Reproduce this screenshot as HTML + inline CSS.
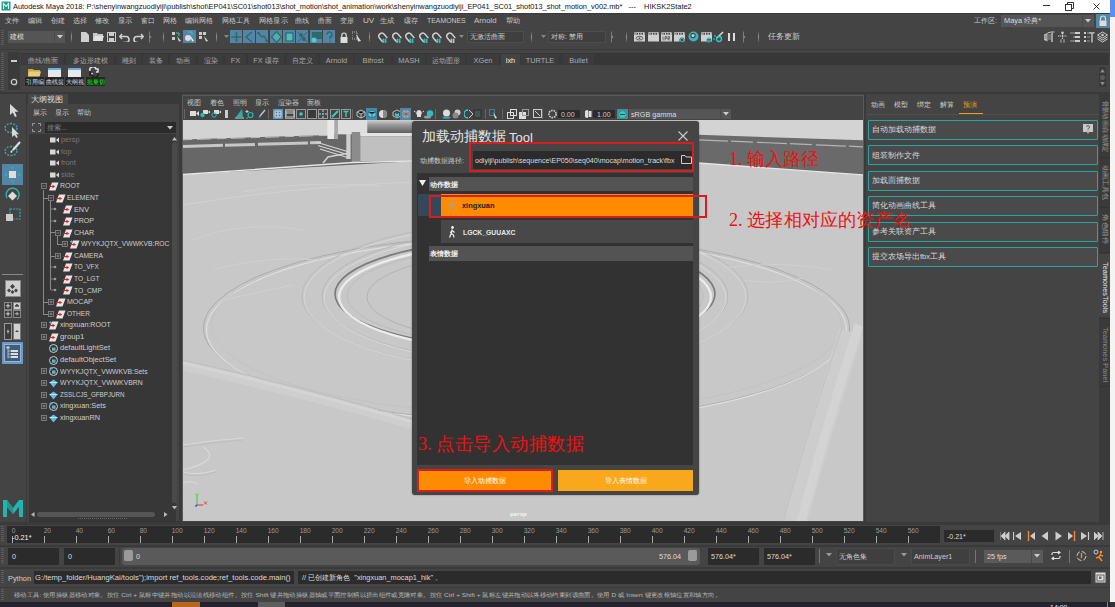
<!DOCTYPE html>
<html><head><meta charset="utf-8">
<style>
*{margin:0;padding:0;box-sizing:border-box}
html,body{width:1115px;height:607px;overflow:hidden;background:#444;font-family:"Liberation Sans",sans-serif;font-size:7.4px;color:#c8c8c8}
.a{position:absolute}
.t{position:absolute;white-space:nowrap;line-height:1}
.f{position:absolute;display:flex;white-space:nowrap;line-height:1}
</style></head><body>
<div class="a" style="left:0px;top:0px;width:1110px;height:13px;background:#fff;"></div>
<div class="a" style="left:1110px;top:0px;width:5px;height:607px;background:#f4f4f4;"></div>
<div class="a" style="left:1110px;top:0px;width:5px;height:17px;background:#5b8ef2;"></div>
<svg class="a" style="left:1px;top:1px;" width="10" height="10" viewBox="0 0 10 10"><rect x="0.5" y="0.5" width="9" height="9" fill="#1d9a93"/><path d="M2.5 8V2.5L5 5.5L7.5 2.5V8" stroke="#e8fffb" stroke-width="1.1" fill="none"/></svg>
<div class="t" style="left:13px;top:3px;font-size:7.4px;color:#111;">Autodesk Maya 2018: P:\shenyinwangzuodiyiji\publish\shot\EP041\SC01\shot013\shot_motion\shot_animation\work\shenyinwangzuodiyiji_EP041_SC01_shot013_shot_motion_v002.mb* &nbsp;&nbsp;--- &nbsp;&nbsp;&nbsp;HIKSK2State2</div>
<div class="a" style="left:1043px;top:5px;width:7px;height:1px;background:#333;"></div>
<svg class="a" style="left:1065px;top:2px;" width="9" height="9" viewBox="0 0 9 9"><rect x="0.5" y="2.5" width="6" height="6" fill="none" stroke="#333"/><path d="M2.5 2.5V0.5H8.5V6.5H6.5" fill="none" stroke="#333"/></svg>
<svg class="a" style="left:1092.5px;top:2.5px;" width="7" height="7" viewBox="0 0 7 7"><path d="M0.5 0.5L6.5 6.5M6.5 0.5L0.5 6.5" stroke="#222" stroke-width="0.9"/></svg>
<div class="a" style="left:0px;top:13px;width:1110px;height:589px;background:#444;"></div>
<div class="a" style="left:0px;top:13px;width:1110px;height:1px;background:#3a3a3a;"></div>
<div class="t" style="left:4.8px;top:17px;font-size:7.4px;color:#c8c8c8;transform-origin:0 0;;transform:scaleX(1.043)">文件</div>
<div class="t" style="left:27.8px;top:17px;font-size:7.4px;color:#c8c8c8;transform-origin:0 0;;transform:scaleX(1.014)">编辑</div>
<div class="t" style="left:50.6px;top:17px;font-size:7.4px;color:#c8c8c8;transform-origin:0 0;;transform:scaleX(1.000)">创建</div>
<div class="t" style="left:72.7px;top:17px;font-size:7.4px;color:#c8c8c8;transform-origin:0 0;;transform:scaleX(1.021)">选择</div>
<div class="t" style="left:95.3px;top:17px;font-size:7.4px;color:#c8c8c8;transform-origin:0 0;;transform:scaleX(1.050)">修改</div>
<div class="t" style="left:118px;top:17px;font-size:7.4px;color:#c8c8c8;transform-origin:0 0;;transform:scaleX(1.036)">显示</div>
<div class="t" style="left:140.7px;top:17px;font-size:7.4px;color:#c8c8c8;transform-origin:0 0;;transform:scaleX(0.964)">窗口</div>
<div class="t" style="left:162.8px;top:17px;font-size:7.4px;color:#c8c8c8;transform-origin:0 0;;transform:scaleX(1.014)">网格</div>
<div class="t" style="left:185.4px;top:17px;font-size:7.4px;color:#c8c8c8;transform-origin:0 0;;transform:scaleX(1.000)">编辑网格</div>
<div class="t" style="left:222.1px;top:17px;font-size:7.4px;color:#c8c8c8;transform-origin:0 0;;transform:scaleX(0.996)">网格工具</div>
<div class="t" style="left:258.6px;top:17px;font-size:7.4px;color:#c8c8c8;transform-origin:0 0;;transform:scaleX(1.032)">网格显示</div>
<div class="t" style="left:294.7px;top:17px;font-size:7.4px;color:#c8c8c8;transform-origin:0 0;;transform:scaleX(1.021)">曲线</div>
<div class="t" style="left:318px;top:17px;font-size:7.4px;color:#c8c8c8;transform-origin:0 0;;transform:scaleX(0.964)">曲面</div>
<div class="t" style="left:340px;top:17px;font-size:7.4px;color:#c8c8c8;transform-origin:0 0;;transform:scaleX(1.000)">变形</div>
<div class="t" style="left:362.7px;top:17px;font-size:7.4px;color:#c8c8c8;transform-origin:0 0;;transform:scaleX(1.099)">UV</div>
<div class="t" style="left:380.4px;top:17px;font-size:7.4px;color:#c8c8c8;transform-origin:0 0;;transform:scaleX(1.043)">生成</div>
<div class="t" style="left:403.6px;top:17px;font-size:7.4px;color:#c8c8c8;transform-origin:0 0;;transform:scaleX(1.029)">缓存</div>
<div class="t" style="left:426.7px;top:17px;font-size:7.4px;color:#c8c8c8;transform-origin:0 0;;transform:scaleX(0.933)">TEAMONES</div>
<div class="t" style="left:474px;top:17px;font-size:7.4px;color:#c8c8c8;transform-origin:0 0;;transform:scaleX(1.057)">Arnold</div>
<div class="t" style="left:505.7px;top:17px;font-size:7.4px;color:#c8c8c8;transform-origin:0 0;;transform:scaleX(1.021)">帮助</div>
<div class="t" style="left:974px;top:17px;font-size:7.4px;color:#c8c8c8;">工作区:</div>
<div class="a" style="left:1001px;top:15px;width:93px;height:12px;background:#555;"></div>
<div class="a" style="left:1082px;top:15px;width:1px;height:12px;background:#4a4a4a;"></div>
<div class="t" style="left:1004px;top:17px;font-size:7.4px;color:#ddd;">Maya 经典*</div>
<svg class="a" style="left:1085px;top:19px;" width="6" height="4" viewBox="0 0 6 4"><path d="M0 0H6L3 3.5Z" fill="#ccc"/></svg>
<div class="a" style="left:1096px;top:14px;width:14px;height:14px;background:#5285a6;"></div>
<svg class="a" style="left:1098px;top:15px;" width="10" height="12" viewBox="0 0 10 12"><path d="M2.5 5.5V3.5A2.5 2.5 0 0 1 7.5 3.5V5.5" fill="none" stroke="#ddd" stroke-width="1.2"/><rect x="1.5" y="5.5" width="7" height="5.5" fill="#ddd"/></svg>
<div class="a" style="left:1px;top:30px;width:3px;height:16px;background:repeating-linear-gradient(#5c5c5c 0 1px,transparent 1px 2px);"></div>
<div class="a" style="left:8px;top:31px;width:57px;height:12px;background:#555;"></div>
<div class="a" style="left:54px;top:31px;width:1px;height:12px;background:#4a4a4a;"></div>
<div class="t" style="left:10px;top:33px;font-size:7.4px;color:#e0e0e0;">建模</div>
<svg class="a" style="left:57px;top:35px;" width="6" height="4" viewBox="0 0 6 4"><path d="M0 0H6L3 3.5Z" fill="#ccc"/></svg>
<svg class="a" style="left:70px;top:30.5px;" width="3" height="12" viewBox="0 0 3 12"><path d="M1.5 0 Q0.3 6.0 1.5 12 Q2.7 6.0 1.5 0Z" fill="#8a8a8a"/></svg>
<svg class="a" style="left:81px;top:32px;" width="8" height="10" viewBox="0 0 8 10"><path d="M0 0H5L8 3V10H0Z" fill="#d0d0d0"/></svg>
<svg class="a" style="left:93px;top:32px;" width="11" height="10" viewBox="0 0 11 10"><path d="M0 1H4L5 2H10V9H0Z" fill="#c8c8c8"/><path d="M2 4H11L9 9H0Z" fill="#e0e0e0"/></svg>
<svg class="a" style="left:107px;top:32px;" width="9" height="10" viewBox="0 0 9 10"><rect x="0.5" y="0.5" width="8" height="9" fill="none" stroke="#ccc"/><rect x="2" y="1" width="5" height="3" fill="#ccc"/><rect x="2" y="6" width="5" height="3" fill="#ccc"/></svg>
<svg class="a" style="left:119px;top:33px;" width="11" height="9" viewBox="0 0 11 9"><path d="M3 1L0.8 3.5L3 6" fill="none" stroke="#d0d0d0" stroke-width="1.5"/><path d="M1 3.5H7A3 3 0 0 1 7 9.5H4" fill="none" stroke="#d0d0d0" stroke-width="1.6"/></svg>
<svg class="a" style="left:133px;top:33px;" width="11" height="9" viewBox="0 0 11 9"><path d="M8 1L10.2 3.5L8 6" fill="none" stroke="#d0d0d0" stroke-width="1.5"/><path d="M10 3.5H4A3 3 0 0 0 4 9.5H5" fill="none" stroke="#d0d0d0" stroke-width="1.6"/></svg>
<svg class="a" style="left:148px;top:30.5px;" width="4" height="12" viewBox="0 0 4 12"><path d="M1.5 0.5V11.5" stroke="#7a7a7a" stroke-width="1"/><path d="M1.5 4L3.5 6L1.5 8Z" fill="#8a8a8a"/></svg>
<svg class="a" style="left:162px;top:30.5px;" width="3" height="12" viewBox="0 0 3 12"><path d="M1.5 0 Q0.3 6.0 1.5 12 Q2.7 6.0 1.5 0Z" fill="#8a8a8a"/></svg>
<svg class="a" style="left:172px;top:31px;" width="10" height="12" viewBox="0 0 10 12"><rect x="0" y="1" width="3" height="3" fill="#ccc"/><rect x="0" y="6" width="3" height="3" fill="#ccc"/><path d="M4 2H7V5" stroke="#3cc" fill="none"/><path d="M5 5L9 10L7 10.5Z" fill="#ddd"/></svg>
<div class="a" style="left:183px;top:30px;width:13px;height:13px;background:#5285a6;"></div>
<svg class="a" style="left:184px;top:31px;" width="11" height="11" viewBox="0 0 11 11"><circle cx="4" cy="7" r="3" fill="#ddd"/><path d="M4 1H8V4" stroke="#3cc" fill="none"/><path d="M6 4L10 10L8 10.5Z" fill="#eee"/></svg>
<svg class="a" style="left:199px;top:31px;" width="10" height="12" viewBox="0 0 10 12"><rect x="0" y="1" width="3" height="3" fill="#ccc"/><rect x="4" y="1" width="3" height="3" fill="#ccc"/><rect x="0" y="5" width="3" height="3" fill="#ccc"/><path d="M5 5L9 10L7 10.5Z" fill="#ddd"/></svg>
<svg class="a" style="left:215px;top:30.5px;" width="3" height="12" viewBox="0 0 3 12"><path d="M1.5 0 Q0.3 6.0 1.5 12 Q2.7 6.0 1.5 0Z" fill="#8a8a8a"/></svg>
<svg class="a" style="left:224px;top:35px;" width="5" height="3" viewBox="0 0 5 3"><path d="M0 0H5L2.5 3Z" fill="#888"/></svg>
<div class="a" style="left:230px;top:30px;width:12px;height:13px;background:#5285a6;"></div>
<svg class="a" style="left:230.5px;top:31px;" width="11" height="12" viewBox="0 0 11 12"><path d="M5.5 1V11M0.5 6H10.5" stroke="#2a6b70" stroke-width="1.6"/></svg>
<div class="a" style="left:243px;top:30px;width:12px;height:13px;background:#5285a6;"></div>
<svg class="a" style="left:243.5px;top:31px;" width="11" height="12" viewBox="0 0 11 12"><path d="M8 1L2 6L8 11" stroke="#2a6b70" stroke-width="1.4" fill="none"/></svg>
<div class="a" style="left:256px;top:30px;width:12px;height:13px;background:#5285a6;"></div>
<svg class="a" style="left:256.5px;top:31px;" width="11" height="12" viewBox="0 0 11 12"><path d="M1 2L5 6L7 5L10 10" stroke="#2a6b70" stroke-width="1.4" fill="none"/><circle cx="1.5" cy="2" r="1.3" fill="#2a6b70"/><circle cx="9.5" cy="10" r="1.3" fill="#2a6b70"/></svg>
<div class="a" style="left:270px;top:30px;width:12px;height:13px;background:#5285a6;"></div>
<svg class="a" style="left:270.5px;top:31px;" width="11" height="12" viewBox="0 0 11 12"><path d="M5.5 0.5L10.5 6L5.5 11.5L0.5 6Z" stroke="#2a6b70" stroke-width="1.2" fill="#5aa"/></svg>
<div class="a" style="left:283px;top:30px;width:12px;height:13px;background:#5285a6;"></div>
<svg class="a" style="left:283.5px;top:31px;" width="11" height="12" viewBox="0 0 11 12"><rect x="2" y="2" width="7" height="8" stroke="#2a6b70" fill="#5bb" stroke-width="1.2"/></svg>
<div class="a" style="left:296px;top:30px;width:12px;height:13px;background:#5285a6;"></div>
<svg class="a" style="left:296.5px;top:31px;" width="11" height="12" viewBox="0 0 11 12"><circle cx="4" cy="4" r="2" fill="#2a6b70"/><circle cx="7" cy="8" r="2" fill="#2a6b70"/><path d="M1 1L10 11M10 1L1 11" stroke="#2a6b70"/></svg>
<div class="a" style="left:310px;top:30px;width:12px;height:13px;background:#5285a6;"></div>
<svg class="a" style="left:310.5px;top:31px;" width="11" height="12" viewBox="0 0 11 12"><rect x="1" y="1" width="10" height="7" fill="#2a6b70"/><circle cx="3" cy="9" r="2.5" fill="#5cc"/></svg>
<div class="a" style="left:323px;top:30px;width:12px;height:13px;background:#5285a6;"></div>
<svg class="a" style="left:323.5px;top:31px;" width="11" height="12" viewBox="0 0 11 12"><path d="M3 3.5A2.5 2.5 0 1 1 6 6V8M6 10V11" stroke="#2a6b70" stroke-width="1.5" fill="none"/></svg>
<svg class="a" style="left:340px;top:32px;" width="8" height="11" viewBox="0 0 8 11"><path d="M1.8 5V3.2A2.2 2.2 0 0 1 6.2 3.2V5" fill="none" stroke="#ddd" stroke-width="1.2"/><rect x="0.5" y="5" width="7" height="6" fill="#ddd"/></svg>
<svg class="a" style="left:352px;top:31px;" width="10" height="12" viewBox="0 0 10 12"><rect x="0" y="1" width="5" height="7" fill="none" stroke="#bbb" stroke-dasharray="1 1"/><path d="M4 3L9 10L6 10.5Z" fill="#ddd"/></svg>
<svg class="a" style="left:368px;top:30.5px;" width="3" height="12" viewBox="0 0 3 12"><path d="M1.5 0 Q0.3 6.0 1.5 12 Q2.7 6.0 1.5 0Z" fill="#8a8a8a"/></svg>
<svg class="a" style="left:377px;top:31px;" width="11" height="12" viewBox="0 0 11 12"><g transform="rotate(-40 5.5 6)"><path d="M2.5 10V5A3 3 0 0 1 8.5 5V10" fill="none" stroke="#d0d0d0" stroke-width="1.5"/></g><path d="M5 9H10M5 11H10M6.5 7.5V12M8.5 7.5V12" stroke="#3cc" stroke-width="0.8"/></svg>
<svg class="a" style="left:391px;top:31px;" width="11" height="12" viewBox="0 0 11 12"><g transform="rotate(-40 5.5 6)"><path d="M2.5 10V5A3 3 0 0 1 8.5 5V10" fill="none" stroke="#d0d0d0" stroke-width="1.5"/></g><path d="M5 9H10M5 11H10M6.5 7.5V12M8.5 7.5V12" stroke="#3cc" stroke-width="0.8"/></svg>
<svg class="a" style="left:404px;top:31px;" width="11" height="12" viewBox="0 0 11 12"><g transform="rotate(-40 5.5 6)"><path d="M2.5 10V5A3 3 0 0 1 8.5 5V10" fill="none" stroke="#d0d0d0" stroke-width="1.5"/></g><path d="M5 9H10M5 11H10M6.5 7.5V12M8.5 7.5V12" stroke="#3cc" stroke-width="0.8"/></svg>
<svg class="a" style="left:418px;top:31px;" width="11" height="12" viewBox="0 0 11 12"><g transform="rotate(-40 5.5 6)"><path d="M2.5 10V5A3 3 0 0 1 8.5 5V10" fill="none" stroke="#d0d0d0" stroke-width="1.5"/></g><path d="M5 9H10M5 11H10M6.5 7.5V12M8.5 7.5V12" stroke="#3cc" stroke-width="0.8"/></svg>
<svg class="a" style="left:431px;top:31px;" width="11" height="12" viewBox="0 0 11 12"><g transform="rotate(-40 5.5 6)"><path d="M2.5 10V5A3 3 0 0 1 8.5 5V10" fill="none" stroke="#d0d0d0" stroke-width="1.5"/></g><path d="M5 9H10M5 11H10M6.5 7.5V12M8.5 7.5V12" stroke="#3cc" stroke-width="0.8"/></svg>
<svg class="a" style="left:445px;top:31px;" width="11" height="12" viewBox="0 0 11 12"><g transform="rotate(-40 5.5 6)"><path d="M2.5 10V5A3 3 0 0 1 8.5 5V10" fill="none" stroke="#d0d0d0" stroke-width="1.5"/></g><path d="M5 9H10M5 11H10M6.5 7.5V12M8.5 7.5V12" stroke="#ccc" stroke-width="0.8"/></svg>
<svg class="a" style="left:459px;top:35px;" width="5" height="3" viewBox="0 0 5 3"><path d="M0 0H5L2.5 3Z" fill="#888"/></svg>
<div class="a" style="left:467px;top:30.5px;width:57px;height:12px;background:#3f3f3f;border:1px solid #4d4d4d"></div>
<div class="t" style="left:470px;top:33px;font-size:7.4px;color:#ccc;">无激活曲面</div>
<svg class="a" style="left:530px;top:30.5px;" width="3" height="12" viewBox="0 0 3 12"><path d="M1.5 0 Q0.3 6.0 1.5 12 Q2.7 6.0 1.5 0Z" fill="#8a8a8a"/></svg>
<svg class="a" style="left:541px;top:35px;" width="5" height="3" viewBox="0 0 5 3"><path d="M0 0H5L2.5 3Z" fill="#888"/></svg>
<div class="a" style="left:548px;top:30.5px;width:58px;height:12px;background:#3f3f3f;border:1px solid #4d4d4d"></div>
<div class="t" style="left:551px;top:33px;font-size:7.4px;color:#ccc;">对称: 禁用</div>
<svg class="a" style="left:610px;top:30.5px;" width="4" height="12" viewBox="0 0 4 12"><path d="M1.5 0.5V11.5" stroke="#7a7a7a" stroke-width="1"/><path d="M1.5 4L3.5 6L1.5 8Z" fill="#8a8a8a"/></svg>
<svg class="a" style="left:625px;top:30.5px;" width="3" height="12" viewBox="0 0 3 12"><path d="M1.5 0 Q0.3 6.0 1.5 12 Q2.7 6.0 1.5 0Z" fill="#8a8a8a"/></svg>
<svg class="a" style="left:634px;top:32px;" width="11" height="10" viewBox="0 0 11 10"><path d="M0.5 0.5H10.5V3H0.5Z" fill="none" stroke="#bbb" stroke-width="0.8"/><path d="M2 0.5V3M4.5 0.5V3M7 0.5V3M9.5 0.5V3" stroke="#ccc" stroke-width="1"/><rect x="0" y="3" width="11" height="6.5" fill="#cfcfcf"/><ellipse cx="5.5" cy="6.2" rx="3.5" ry="1.8" fill="none" stroke="#555" stroke-width="0.9"/><circle cx="5.5" cy="6.2" r="0.9" fill="#555"/></svg>
<svg class="a" style="left:648px;top:32px;" width="11" height="10" viewBox="0 0 11 10"><path d="M0.5 0.5H10.5V3H0.5Z" fill="none" stroke="#bbb" stroke-width="0.8"/><path d="M2 0.5V3M4.5 0.5V3M7 0.5V3M9.5 0.5V3" stroke="#ccc" stroke-width="1"/><rect x="0" y="3" width="11" height="6.5" fill="#cfcfcf"/></svg>
<svg class="a" style="left:661px;top:32px;" width="11" height="10" viewBox="0 0 11 10"><path d="M0.5 0.5H10.5V3H0.5Z" fill="none" stroke="#bbb" stroke-width="0.8"/><path d="M2 0.5V3M4.5 0.5V3M7 0.5V3M9.5 0.5V3" stroke="#ccc" stroke-width="1"/><rect x="0" y="3" width="11" height="6.5" fill="#cfcfcf"/><path d="M2 4.5V8.5M4 8.5V4.5H5.5V6.5H4M7 8.5V4.5H8.5V6.5H7L9 8.5" stroke="#555" stroke-width="0.8" fill="none"/></svg>
<svg class="a" style="left:674px;top:32px;" width="11" height="11" viewBox="0 0 11 11"><path d="M0.5 0.5H10.5V3H0.5Z" fill="none" stroke="#bbb" stroke-width="0.8"/><path d="M2 0.5V3M4.5 0.5V3M7 0.5V3M9.5 0.5V3" stroke="#ccc" stroke-width="1"/><rect x="0" y="3" width="11" height="6.5" fill="#cfcfcf"/><circle cx="8" cy="8" r="2.6" fill="#444"/><circle cx="8" cy="8" r="1.8" fill="none" stroke="#3bc" stroke-width="1"/></svg>
<svg class="a" style="left:688px;top:31px;" width="11" height="11" viewBox="0 0 11 11"><circle cx="5.5" cy="5.5" r="5" fill="#38b6be"/><circle cx="5" cy="4.6" r="2.6" fill="#3a3a3a"/><circle cx="5" cy="4.6" r="1.6" fill="#ccc"/></svg>
<svg class="a" style="left:701px;top:32px;" width="11" height="11" viewBox="0 0 11 11"><path d="M0.5 0.5H10.5V3H0.5Z" fill="none" stroke="#bbb" stroke-width="0.8"/><path d="M2 0.5V3M4.5 0.5V3M7 0.5V3M9.5 0.5V3" stroke="#ccc" stroke-width="1"/><rect x="0" y="3" width="11" height="6.5" fill="#cfcfcf"/><circle cx="8" cy="8" r="2.6" fill="#3bc"/><path d="M6 7.5H10M6 9H10" stroke="#444" stroke-width="0.6"/></svg>
<svg class="a" style="left:713px;top:31px;" width="11" height="12" viewBox="0 0 11 12"><path d="M10 1L4 7" stroke="#ddd" stroke-width="1.5"/><circle cx="6" cy="8" r="2.5" fill="none" stroke="#3cc" stroke-width="1.3"/><path d="M0 8H2M1 5H3" stroke="#3cc"/></svg>
<div class="a" style="left:728px;top:33px;width:2px;height:8px;background:#ddd;"></div>
<div class="a" style="left:733px;top:33px;width:2px;height:8px;background:#ddd;"></div>
<svg class="a" style="left:742px;top:30.5px;" width="4" height="12" viewBox="0 0 4 12"><path d="M1.5 0.5V11.5" stroke="#7a7a7a" stroke-width="1"/><path d="M1.5 4L3.5 6L1.5 8Z" fill="#8a8a8a"/></svg>
<svg class="a" style="left:757px;top:30.5px;" width="3" height="12" viewBox="0 0 3 12"><path d="M1.5 0 Q0.3 6.0 1.5 12 Q2.7 6.0 1.5 0Z" fill="#8a8a8a"/></svg>
<div class="t" style="left:768px;top:33px;font-size:7.6px;color:#d0d0d0;">任务更新</div>
<svg class="a" style="left:1043px;top:31px;" width="12" height="12" viewBox="0 0 12 12"><path d="M1 3.5L4.5 2V10.5L1 9Z" fill="#bbb"/><path d="M1.5 5H4M1.5 7H4" stroke="#555" stroke-width="0.6"/><path d="M4.5 2L8 1H11.5" stroke="#ccc" stroke-width="1"/><path d="M9 1.5V11" stroke="#d0d0d0" stroke-width="1.3"/><path d="M5 4H8M5 6H8M5 8H8" stroke="#aaa" stroke-width="0.8"/></svg>
<svg class="a" style="left:1057px;top:31px;" width="11" height="12" viewBox="0 0 11 12"><circle cx="5.5" cy="1.8" r="1.3" fill="#ccc"/><path d="M5.5 3.5V8M1 5H10M4 8.5V11.5M7 8.5V11.5" stroke="#ccc" stroke-width="1.1" stroke-dasharray="1.2 0.6"/></svg>
<svg class="a" style="left:1070px;top:31px;" width="11" height="12" viewBox="0 0 11 12"><path d="M0 2H5M3 6H5M0 10H5" stroke="#bbb" stroke-width="0.8"/><rect x="5" y="1" width="5" height="2" fill="#ccc"/><rect x="5" y="5" width="5" height="2" fill="#ccc"/><rect x="5" y="9" width="5" height="2" fill="#ccc"/></svg>
<svg class="a" style="left:1084px;top:31px;" width="11" height="12" viewBox="0 0 11 12"><rect x="0" y="1" width="2" height="2" fill="#ccc"/><rect x="0" y="5" width="2" height="2" fill="#ccc"/><rect x="0" y="9" width="2" height="2" fill="#ccc"/><path d="M3 2H6M3 6H6M3 10H6" stroke="#aaa" stroke-width="0.8"/><path d="M5 1.8H10.5M8 2V11.5" stroke="#d0d0d0" stroke-width="1.3"/></svg>
<svg class="a" style="left:1097px;top:31px;" width="11" height="12" viewBox="0 0 11 12"><path d="M5.5 1L10.5 4L5.5 7L0.5 4Z" fill="none" stroke="#ccc"/><path d="M0.5 6L5.5 9L10.5 6M0.5 8L5.5 11L10.5 8" stroke="#ccc" fill="none"/><circle cx="5.5" cy="4" r="1.3" fill="#ccc"/></svg>
<div class="a" style="left:0px;top:49px;width:1110px;height:1px;background:#3a3a3a;"></div>
<div class="a" style="left:1px;top:53px;width:3px;height:37px;background:repeating-linear-gradient(#5c5c5c 0 1px,transparent 1px 2px);"></div>
<div class="a" style="left:8px;top:52px;width:12px;height:38px;background:#3a3a3a;"></div>
<div class="a" style="left:11px;top:60px;width:6px;height:2px;background:#ccc;"></div>
<svg class="a" style="left:10px;top:78px;" width="8" height="8" viewBox="0 0 8 8"><circle cx="4" cy="4" r="2.7" fill="none" stroke="#ccc" stroke-width="1.3"/></svg>
<div class="a" style="left:21px;top:53px;width:1088px;height:11.5px;background:#373737;"></div>
<div class="a" style="left:22px;top:54px;width:42px;height:11px;background:#3c3c3c;"></div>
<div class="t" style="left:22px;top:56.5px;width:42px;text-align:center;font-size:7.4px;color:#aaa">曲线/曲面</div>
<div class="a" style="left:66px;top:54px;width:48px;height:11px;background:#3c3c3c;"></div>
<div class="t" style="left:66px;top:56.5px;width:48px;text-align:center;font-size:7.4px;color:#aaa">多边形建模</div>
<div class="a" style="left:116px;top:54px;width:25px;height:11px;background:#3c3c3c;"></div>
<div class="t" style="left:116px;top:56.5px;width:25px;text-align:center;font-size:7.4px;color:#aaa">雕刻</div>
<div class="a" style="left:143px;top:54px;width:25px;height:11px;background:#3c3c3c;"></div>
<div class="t" style="left:143px;top:56.5px;width:25px;text-align:center;font-size:7.4px;color:#aaa">装备</div>
<div class="a" style="left:170px;top:54px;width:26px;height:11px;background:#3c3c3c;"></div>
<div class="t" style="left:170px;top:56.5px;width:26px;text-align:center;font-size:7.4px;color:#aaa">动画</div>
<div class="a" style="left:198px;top:54px;width:25px;height:11px;background:#3c3c3c;"></div>
<div class="t" style="left:198px;top:56.5px;width:25px;text-align:center;font-size:7.4px;color:#aaa">渲染</div>
<div class="a" style="left:225px;top:54px;width:21px;height:11px;background:#3c3c3c;"></div>
<div class="t" style="left:225px;top:56.5px;width:21px;text-align:center;font-size:7.4px;color:#aaa">FX</div>
<div class="a" style="left:248px;top:54px;width:36px;height:11px;background:#3c3c3c;"></div>
<div class="t" style="left:248px;top:56.5px;width:36px;text-align:center;font-size:7.4px;color:#aaa">FX 缓存</div>
<div class="a" style="left:287px;top:54px;width:31px;height:11px;background:#3c3c3c;"></div>
<div class="t" style="left:287px;top:56.5px;width:31px;text-align:center;font-size:7.4px;color:#aaa">自定义</div>
<div class="a" style="left:320px;top:54px;width:33px;height:11px;background:#3c3c3c;"></div>
<div class="t" style="left:320px;top:56.5px;width:33px;text-align:center;font-size:7.4px;color:#aaa">Arnold</div>
<div class="a" style="left:355px;top:54px;width:36px;height:11px;background:#3c3c3c;"></div>
<div class="t" style="left:355px;top:56.5px;width:36px;text-align:center;font-size:7.4px;color:#aaa">Bifrost</div>
<div class="a" style="left:393px;top:54px;width:32px;height:11px;background:#3c3c3c;"></div>
<div class="t" style="left:393px;top:56.5px;width:32px;text-align:center;font-size:7.4px;color:#aaa">MASH</div>
<div class="a" style="left:427px;top:54px;width:38px;height:11px;background:#3c3c3c;"></div>
<div class="t" style="left:427px;top:56.5px;width:38px;text-align:center;font-size:7.4px;color:#aaa">运动图形</div>
<div class="a" style="left:467px;top:54px;width:32px;height:11px;background:#3c3c3c;"></div>
<div class="t" style="left:467px;top:56.5px;width:32px;text-align:center;font-size:7.4px;color:#aaa">XGen</div>
<div class="a" style="left:501px;top:54px;width:19px;height:11px;background:#444;"></div>
<div class="t" style="left:501px;top:56.5px;width:19px;text-align:center;font-size:7.4px;color:#eee">lxh</div>
<div class="a" style="left:521px;top:54px;width:38px;height:11px;background:#3c3c3c;"></div>
<div class="t" style="left:521px;top:56.5px;width:38px;text-align:center;font-size:7.4px;color:#aaa">TURTLE</div>
<div class="a" style="left:563px;top:54px;width:31px;height:11px;background:#3c3c3c;"></div>
<div class="t" style="left:563px;top:56.5px;width:31px;text-align:center;font-size:7.4px;color:#aaa">Bullet</div>
<div class="a" style="left:21px;top:64.5px;width:1089px;height:27.5px;background:#444;"></div>
<div class="a" style="left:1099px;top:67px;width:7px;height:20px;background:#393939;"></div>
<svg class="a" style="left:1100px;top:69px;" width="5" height="3.5" viewBox="0 0 5 3.5"><path d="M0 3.5H5L2.5 0Z" fill="#888"/></svg>
<div class="a" style="left:1100px;top:75px;width:5px;height:5px;background:#5a5a5a;border-radius:50%"></div>
<svg class="a" style="left:1100px;top:82px;" width="5" height="3.5" viewBox="0 0 5 3.5"><path d="M0 0H5L2.5 3.5Z" fill="#888"/></svg>
<svg class="a" style="left:28px;top:68px;" width="13" height="9" viewBox="0 0 13 9"><path d="M0 1H5L6 2H12V8H0Z" fill="#c9a84a"/><path d="M1 3.5H13L11.5 8.5H0Z" fill="#e8cf78"/></svg>
<div class="a" style="left:48px;top:68px;width:13px;height:9px;background:#e8e8e8;border-top:2px solid #6ab0e0"></div>
<div class="a" style="left:68px;top:68px;width:13px;height:9px;background:#e8e8e8;border-top:2px solid #6ab0e0"></div>
<svg class="a" style="left:88px;top:67px;" width="12" height="10" viewBox="0 0 12 10"><path d="M2 4A3 3 0 0 1 8 2H10V5H4V8" stroke="#ddd" stroke-width="1.6" fill="none"/><path d="M10 6A3 3 0 0 1 4 8H2V5H8" stroke="#222" stroke-width="1.6" fill="none"/></svg>
<div class="a" style="left:25px;top:77px;width:19px;height:9px;background:#262626;"></div>
<div class="t" style="left:26px;top:78.5px;font-size:6.3px;color:#ddd;">引用编</div>
<div class="a" style="left:45px;top:77px;width:19px;height:9px;background:#262626;"></div>
<div class="t" style="left:46px;top:78.5px;font-size:6.3px;color:#ddd;">曲线提</div>
<div class="a" style="left:65px;top:77px;width:19px;height:9px;background:#262626;"></div>
<div class="t" style="left:66px;top:78.5px;font-size:6.3px;color:#ddd;">大纲视</div>
<div class="a" style="left:86px;top:77px;width:19px;height:9px;background:#262626;"></div>
<div class="t" style="left:87px;top:78.5px;font-size:6.3px;color:#0f0;">批量切</div>
<div class="a" style="left:0px;top:602px;width:1110px;height:5px;background:#24222c;"></div>
<div class="a" style="left:172px;top:602px;width:28px;height:5px;background:#b8651e;"></div>
<div class="a" style="left:258px;top:602px;width:27px;height:5px;background:#5e5e5e;"></div>
<div class="a" style="left:0px;top:92px;width:1110px;height:2px;background:#393939;"></div>
<div class="a" style="left:7px;top:94px;width:3px;height:3px;background:repeating-linear-gradient(#5c5c5c 0 1px,transparent 1px 2px);"></div>
<div class="a" style="left:0px;top:94px;width:27px;height:429px;background:#444;"></div>
<svg class="a" style="left:9px;top:103px;" width="10" height="15" viewBox="0 0 10 15"><path d="M1 1V12L3.8 9.5L6 14L7.8 13.2L5.8 8.8H9.5Z" fill="#d8d8d8"/></svg>
<svg class="a" style="left:4px;top:122px;" width="17" height="16" viewBox="0 0 17 16"><ellipse cx="7" cy="6" rx="6" ry="4.5" fill="none" stroke="#2bb3b3" stroke-width="1.4" stroke-dasharray="2 1.3"/><path d="M8 5V15L10.5 13L12.3 16L13.8 15.2L12.2 12.3H15Z" fill="#d8d8d8"/></svg>
<svg class="a" style="left:4px;top:141px;" width="17" height="17" viewBox="0 0 17 17"><ellipse cx="7" cy="10" rx="6" ry="4.5" fill="none" stroke="#2bb3b3" stroke-width="1.4" stroke-dasharray="2 1.3"/><path d="M16 1L9 9" stroke="#ddd" stroke-width="2"/><path d="M9 8L6 11L8 12Z" fill="#ddd"/></svg>
<div class="a" style="left:2px;top:164px;width:21px;height:21px;background:#5285a6;"></div>
<svg class="a" style="left:3px;top:165px;" width="19" height="19" viewBox="0 0 19 19"><rect x="6" y="6" width="7" height="7" fill="#ddd"/><path d="M9.5 1L7.5 3.5H11.5Z M9.5 18L7.5 15.5H11.5Z M1 9.5L3.5 7.5V11.5Z M18 9.5L15.5 7.5V11.5Z" fill="#2bb3b3"/></svg>
<svg class="a" style="left:4px;top:187px;" width="17" height="17" viewBox="0 0 17 17"><path d="M3 11A6.5 6.5 0 1 1 13 12.5" fill="none" stroke="#2bb3b3" stroke-width="1.4"/><path d="M8.5 4.5L13 9L8.5 13.5L4 9Z" fill="#ddd"/></svg>
<svg class="a" style="left:5px;top:208px;" width="16" height="14" viewBox="0 0 16 14"><rect x="5" y="1" width="10" height="10" fill="none" stroke="#2bb3b3" stroke-width="1.2" stroke-dasharray="2 1.2"/><rect x="1" y="6" width="7" height="7" fill="#ccc"/></svg>
<div class="a" style="left:2px;top:274px;width:21px;height:1px;background:#888;"></div>
<div class="a" style="left:5px;top:280px;width:16px;height:17px;background:#cfcfcf;border:1px solid #888"></div>
<svg class="a" style="left:6px;top:282px;" width="13" height="13" viewBox="0 0 13 13"><path d="M6.5 2L9 4.5L6.5 7L4 4.5Z M3 6.5L5 8.5L3 10.5L1 8.5Z M10 6.5L12 8.5L10 10.5L8 8.5Z M6.5 8L8.5 10L6.5 12L4.5 10Z" fill="#444"/></svg>
<div class="a" style="left:4px;top:302px;width:8px;height:7.5px;background:#3c3c3c;border:1px solid #888"></div>
<div class="a" style="left:13px;top:302px;width:8px;height:7.5px;background:#d0d0d0;border:1px solid #888"></div>
<div class="a" style="left:4px;top:310px;width:8px;height:7.5px;background:#3c3c3c;border:1px solid #888"></div>
<div class="a" style="left:13px;top:310px;width:8px;height:7.5px;background:#3c3c3c;border:1px solid #888"></div>
<svg class="a" style="left:4px;top:302px;" width="8" height="8" viewBox="0 0 8 8"><path d="M4 1.5V6M1.8 3.8H6.2" stroke="#ccc" stroke-width="1"/></svg>
<svg class="a" style="left:4px;top:310px;" width="8" height="8" viewBox="0 0 8 8"><path d="M4 1.5V6M1.8 3.8H6.2" stroke="#ccc" stroke-width="1"/></svg>
<svg class="a" style="left:13px;top:302px;" width="8" height="8" viewBox="0 0 8 8"><path d="M4 2L6 4H2Z M2 4.5H6" fill="#444" stroke="#444" stroke-width="0.6"/></svg>
<svg class="a" style="left:13px;top:310px;" width="8" height="8" viewBox="0 0 8 8"><path d="M1.8 3.8H6.2M4 2V5.5" stroke="#bbb" stroke-width="0.9"/></svg>
<div class="a" style="left:4px;top:323px;width:8px;height:17px;background:#3c3c3c;border:1px solid #999"></div>
<svg class="a" style="left:4px;top:323px;" width="8" height="17" viewBox="0 0 8 17"><path d="M4 6.5V10.5M2.8 8.5H5.2" stroke="#bbb" stroke-width="0.9"/></svg>
<div class="a" style="left:13px;top:323px;width:8px;height:17px;background:#d0d0d0;border:1px solid #777"></div>
<svg class="a" style="left:13px;top:323px;" width="8" height="17" viewBox="0 0 8 17"><path d="M4 7L6 9H2Z" fill="#444"/></svg>
<div class="a" style="left:2px;top:342px;width:21px;height:22px;background:#5a9fcf;"></div>
<div class="a" style="left:4px;top:344px;width:17px;height:18px;background:#3d5e78;border:1px solid #aac"></div>
<svg class="a" style="left:5px;top:345px;" width="15" height="16" viewBox="0 0 15 16"><rect x="1.5" y="1.5" width="3" height="2" fill="#ddd"/><path d="M3 3.5V13M3 6H6M3 9H6M3 12H6" stroke="#ccc" stroke-width="0.8"/><rect x="6" y="5" width="7" height="2" fill="#ddd"/><rect x="6" y="8" width="7" height="2" fill="#ddd"/><rect x="6" y="11" width="7" height="2" fill="#ddd"/></svg>
<svg class="a" style="left:3px;top:499px;" width="20" height="19" viewBox="0 0 20 19"><path d="M0 18V1H4L10 9L16 1H20V18H16V8L10 15L4 8V18Z" fill="#1fb5b0"/><path d="M4 1L10 9V15L4 8Z" fill="#2a8f8f"/></svg>
<div class="a" style="left:27px;top:94px;width:152px;height:10px;background:#393939;"></div>
<div class="a" style="left:28px;top:94px;width:40px;height:10px;background:#474747;"></div>
<div class="t" style="left:31px;top:96px;font-size:7.6px;color:#ddd;">大纲视图</div>
<div class="a" style="left:26px;top:94px;width:1px;height:428px;background:#393939;"></div>
<div class="a" style="left:27px;top:104px;width:152px;height:418px;background:#444;"></div>
<div class="f" style="left:33px;top:108.5px;font-size:7.4px;color:#c8c8c8;gap:8px"><span>展示</span><span>显示</span><span>帮助</span></div>
<svg class="a" style="left:32px;top:123px;" width="9" height="9" viewBox="0 0 9 9"><path d="M0.5 3V0.5H3M6 0.5H8.5V3M8.5 6V8.5H6M3 8.5H0.5V6" stroke="#999" fill="none"/></svg>
<div class="a" style="left:45px;top:122px;width:131px;height:11px;background:#2b2b2b;"></div>
<div class="t" style="left:47px;top:124px;font-size:7.4px;color:#888;">搜索...</div>
<svg class="a" style="left:167px;top:126px;" width="6" height="4" viewBox="0 0 6 4"><path d="M0 0H6L3 3.5Z" fill="#ccc"/></svg>
<div class="a" style="left:29px;top:134px;width:147px;height:388px;background:#373737;"></div>
<svg class="a" style="left:172px;top:137px;" width="5" height="4" viewBox="0 0 5 4"><path d="M0 3.5H5L2.5 0Z" fill="#bbb"/></svg>
<div class="a" style="left:172px;top:142px;width:5px;height:361px;background:#4a4a4a;border-radius:2.5px"></div>
<svg class="a" style="left:172px;top:506px;" width="5" height="4" viewBox="0 0 5 4"><path d="M0 0H5L2.5 3.5Z" fill="#bbb"/></svg>
<svg class="a" style="left:31px;top:511.5px;" width="4" height="5" viewBox="0 0 4 5"><path d="M3.5 0V5L0 2.5Z" fill="#bbb"/></svg>
<div class="a" style="left:37px;top:511.5px;width:118px;height:5px;background:#555;border-radius:2.5px"></div>
<svg class="a" style="left:164px;top:511.5px;" width="4" height="5" viewBox="0 0 4 5"><path d="M0 0V5L3.5 2.5Z" fill="#bbb"/></svg>
<div class="a" style="left:78px;top:517.5px;width:50px;height:1px;background:repeating-linear-gradient(90deg,#666 0 1px,transparent 1px 2px);"></div>
<div class="a" style="left:29px;top:521px;width:150px;height:1px;background:#333;"></div>
<div class="a" style="left:43px;top:190px;width:1px;height:124px;background:#8a8a8a;"></div>
<div class="a" style="left:50px;top:201px;width:1px;height:89px;background:#8a8a8a;"></div>
<div class="a" style="left:57px;top:236px;width:1px;height:8px;background:#8a8a8a;"></div>
<div class="a" style="left:43px;top:197.8px;width:5px;height:0.8px;background:#8a8a8a;"></div>
<div class="a" style="left:43px;top:302px;width:5px;height:0.8px;background:#8a8a8a;"></div>
<div class="a" style="left:43px;top:313.6px;width:5px;height:0.8px;background:#8a8a8a;"></div>
<div class="a" style="left:50px;top:232.4px;width:5px;height:0.8px;background:#8a8a8a;"></div>
<div class="a" style="left:50px;top:255.8px;width:5px;height:0.8px;background:#8a8a8a;"></div>
<div class="a" style="left:57px;top:244px;width:5px;height:0.8px;background:#8a8a8a;"></div>
<svg class="a" style="left:50px;top:137.0px;" width="9" height="6" viewBox="0 0 9 6"><rect x="0" y="0.5" width="5.5" height="5" fill="#d8d8d8"/><path d="M6 3L9 0.5V5.5Z" fill="#d8d8d8"/></svg>
<div class="t" style="left:61px;top:136.2px;font-size:7.4px;color:#777;">persp</div>
<svg class="a" style="left:50px;top:148.57px;" width="9" height="6" viewBox="0 0 9 6"><rect x="0" y="0.5" width="5.5" height="5" fill="#d8d8d8"/><path d="M6 3L9 0.5V5.5Z" fill="#d8d8d8"/></svg>
<div class="t" style="left:61px;top:147.77px;font-size:7.4px;color:#777;">top</div>
<svg class="a" style="left:50px;top:160.14px;" width="9" height="6" viewBox="0 0 9 6"><rect x="0" y="0.5" width="5.5" height="5" fill="#d8d8d8"/><path d="M6 3L9 0.5V5.5Z" fill="#d8d8d8"/></svg>
<div class="t" style="left:61px;top:159.34px;font-size:7.4px;color:#777;">front</div>
<svg class="a" style="left:50px;top:171.71px;" width="9" height="6" viewBox="0 0 9 6"><rect x="0" y="0.5" width="5.5" height="5" fill="#d8d8d8"/><path d="M6 3L9 0.5V5.5Z" fill="#d8d8d8"/></svg>
<div class="t" style="left:61px;top:170.91px;font-size:7.4px;color:#777;">side</div>
<svg class="a" style="left:49px;top:182.28px;" width="10" height="9" viewBox="0 0 10 9"><path d="M3 0.5H9.5L6.5 8.5H0Z" fill="#e6e6e6"/><path d="M0 4.5H4.5" stroke="#d22" stroke-width="1.1"/><path d="M3.5 2.8L6.2 4.5L3.5 6.2Z" fill="#d22"/></svg>
<svg class="a" style="left:41px;top:183.28px;" width="6" height="6" viewBox="0 0 6 6"><rect x="0.5" y="0.5" width="5" height="5" fill="#373737" stroke="#8a8a8a" stroke-width="0.8"/><path d="M1.5 3H4.5" stroke="#999" stroke-width="0.8"/></svg>
<div class="t" style="left:60px;top:182.48px;font-size:7.4px;color:#cfcfcf;transform-origin:0 0;;transform:scaleX(0.936)">ROOT</div>
<svg class="a" style="left:56px;top:193.85px;" width="10" height="9" viewBox="0 0 10 9"><path d="M3 0.5H9.5L6.5 8.5H0Z" fill="#e6e6e6"/><path d="M0 4.5H4.5" stroke="#d22" stroke-width="1.1"/><path d="M3.5 2.8L6.2 4.5L3.5 6.2Z" fill="#d22"/></svg>
<svg class="a" style="left:48px;top:194.85px;" width="6" height="6" viewBox="0 0 6 6"><rect x="0.5" y="0.5" width="5" height="5" fill="#373737" stroke="#8a8a8a" stroke-width="0.8"/><path d="M1.5 3H4.5" stroke="#999" stroke-width="0.8"/></svg>
<div class="t" style="left:67px;top:194.05px;font-size:7.4px;color:#cfcfcf;transform-origin:0 0;;transform:scaleX(0.916)">ELEMENT</div>
<svg class="a" style="left:63px;top:205.42px;" width="10" height="9" viewBox="0 0 10 9"><path d="M3 0.5H9.5L6.5 8.5H0Z" fill="#e6e6e6"/><path d="M0 4.5H4.5" stroke="#d22" stroke-width="1.1"/><path d="M3.5 2.8L6.2 4.5L3.5 6.2Z" fill="#d22"/></svg>
<svg class="a" style="left:51px;top:207.42px;" width="6" height="4" viewBox="0 0 6 4"><path d="M0 2H4" stroke="#8a8a8a" stroke-width="0.8"/><circle cx="4" cy="2" r="1.3" fill="#999"/></svg>
<div class="t" style="left:74px;top:205.62px;font-size:7.4px;color:#cfcfcf;transform-origin:0 0;;transform:scaleX(0.987)">ENV</div>
<svg class="a" style="left:63px;top:216.99px;" width="10" height="9" viewBox="0 0 10 9"><path d="M3 0.5H9.5L6.5 8.5H0Z" fill="#e6e6e6"/><path d="M0 4.5H4.5" stroke="#d22" stroke-width="1.1"/><path d="M3.5 2.8L6.2 4.5L3.5 6.2Z" fill="#d22"/></svg>
<svg class="a" style="left:51px;top:218.99px;" width="6" height="4" viewBox="0 0 6 4"><path d="M0 2H4" stroke="#8a8a8a" stroke-width="0.8"/><circle cx="4" cy="2" r="1.3" fill="#999"/></svg>
<div class="t" style="left:74px;top:217.19px;font-size:7.4px;color:#cfcfcf;transform-origin:0 0;;transform:scaleX(0.955)">PROP</div>
<svg class="a" style="left:63px;top:228.56px;" width="10" height="9" viewBox="0 0 10 9"><path d="M3 0.5H9.5L6.5 8.5H0Z" fill="#e6e6e6"/><path d="M0 4.5H4.5" stroke="#d22" stroke-width="1.1"/><path d="M3.5 2.8L6.2 4.5L3.5 6.2Z" fill="#d22"/></svg>
<svg class="a" style="left:55px;top:229.56px;" width="6" height="6" viewBox="0 0 6 6"><rect x="0.5" y="0.5" width="5" height="5" fill="#373737" stroke="#8a8a8a" stroke-width="0.8"/><path d="M1.5 3H4.5" stroke="#999" stroke-width="0.8"/></svg>
<div class="t" style="left:74px;top:228.76px;font-size:7.4px;color:#cfcfcf;transform-origin:0 0;;transform:scaleX(0.955)">CHAR</div>
<svg class="a" style="left:70px;top:240.13px;" width="10" height="9" viewBox="0 0 10 9"><path d="M3 0.5H9.5L6.5 8.5H0Z" fill="#e6e6e6"/><path d="M0 4.5H4.5" stroke="#d22" stroke-width="1.1"/><path d="M3.5 2.8L6.2 4.5L3.5 6.2Z" fill="#d22"/><path d="M1.5 0.2L3.2 1.6L1.5 3L-0.2 1.6Z" fill="#6af"/></svg>
<svg class="a" style="left:62px;top:241.13px;" width="6" height="6" viewBox="0 0 6 6"><rect x="0.5" y="0.5" width="5" height="5" fill="#373737" stroke="#8a8a8a" stroke-width="0.8"/><path d="M1.5 3H4.5" stroke="#999" stroke-width="0.8"/><path d="M3 1.5V4.5" stroke="#999" stroke-width="0.8"/></svg>
<div class="t" style="left:81px;top:240.33px;font-size:7.4px;color:#cfcfcf;transform-origin:0 0;;transform:scaleX(0.913)">WYYKJQTX_VWWKVB:ROC</div>
<svg class="a" style="left:63px;top:251.7px;" width="10" height="9" viewBox="0 0 10 9"><path d="M3 0.5H9.5L6.5 8.5H0Z" fill="#e6e6e6"/><path d="M0 4.5H4.5" stroke="#d22" stroke-width="1.1"/><path d="M3.5 2.8L6.2 4.5L3.5 6.2Z" fill="#d22"/></svg>
<svg class="a" style="left:55px;top:252.7px;" width="6" height="6" viewBox="0 0 6 6"><rect x="0.5" y="0.5" width="5" height="5" fill="#373737" stroke="#8a8a8a" stroke-width="0.8"/><path d="M1.5 3H4.5" stroke="#999" stroke-width="0.8"/><path d="M3 1.5V4.5" stroke="#999" stroke-width="0.8"/></svg>
<div class="t" style="left:74px;top:251.9px;font-size:7.4px;color:#cfcfcf;transform-origin:0 0;;transform:scaleX(0.917)">CAMERA</div>
<svg class="a" style="left:63px;top:263.27px;" width="10" height="9" viewBox="0 0 10 9"><path d="M3 0.5H9.5L6.5 8.5H0Z" fill="#e6e6e6"/><path d="M0 4.5H4.5" stroke="#d22" stroke-width="1.1"/><path d="M3.5 2.8L6.2 4.5L3.5 6.2Z" fill="#d22"/></svg>
<svg class="a" style="left:51px;top:265.27px;" width="6" height="4" viewBox="0 0 6 4"><path d="M0 2H4" stroke="#8a8a8a" stroke-width="0.8"/><circle cx="4" cy="2" r="1.3" fill="#999"/></svg>
<div class="t" style="left:74px;top:263.47px;font-size:7.4px;color:#cfcfcf;transform-origin:0 0;;transform:scaleX(0.866)">TO_VFX</div>
<svg class="a" style="left:63px;top:274.84px;" width="10" height="9" viewBox="0 0 10 9"><path d="M3 0.5H9.5L6.5 8.5H0Z" fill="#e6e6e6"/><path d="M0 4.5H4.5" stroke="#d22" stroke-width="1.1"/><path d="M3.5 2.8L6.2 4.5L3.5 6.2Z" fill="#d22"/></svg>
<svg class="a" style="left:51px;top:276.84px;" width="6" height="4" viewBox="0 0 6 4"><path d="M0 2H4" stroke="#8a8a8a" stroke-width="0.8"/><circle cx="4" cy="2" r="1.3" fill="#999"/></svg>
<div class="t" style="left:74px;top:275.04px;font-size:7.4px;color:#cfcfcf;transform-origin:0 0;;transform:scaleX(0.891)">TO_LGT</div>
<svg class="a" style="left:63px;top:286.41px;" width="10" height="9" viewBox="0 0 10 9"><path d="M3 0.5H9.5L6.5 8.5H0Z" fill="#e6e6e6"/><path d="M0 4.5H4.5" stroke="#d22" stroke-width="1.1"/><path d="M3.5 2.8L6.2 4.5L3.5 6.2Z" fill="#d22"/></svg>
<svg class="a" style="left:51px;top:288.41px;" width="6" height="4" viewBox="0 0 6 4"><path d="M0 2H4" stroke="#8a8a8a" stroke-width="0.8"/><circle cx="4" cy="2" r="1.3" fill="#999"/></svg>
<div class="t" style="left:74px;top:286.61px;font-size:7.4px;color:#cfcfcf;transform-origin:0 0;;transform:scaleX(0.913)">TO_CMP</div>
<svg class="a" style="left:56px;top:297.98px;" width="10" height="9" viewBox="0 0 10 9"><path d="M3 0.5H9.5L6.5 8.5H0Z" fill="#e6e6e6"/><path d="M0 4.5H4.5" stroke="#d22" stroke-width="1.1"/><path d="M3.5 2.8L6.2 4.5L3.5 6.2Z" fill="#d22"/></svg>
<svg class="a" style="left:48px;top:298.98px;" width="6" height="6" viewBox="0 0 6 6"><rect x="0.5" y="0.5" width="5" height="5" fill="#373737" stroke="#8a8a8a" stroke-width="0.8"/><path d="M1.5 3H4.5" stroke="#999" stroke-width="0.8"/><path d="M3 1.5V4.5" stroke="#999" stroke-width="0.8"/></svg>
<div class="t" style="left:67px;top:298.18px;font-size:7.4px;color:#cfcfcf;transform-origin:0 0;;transform:scaleX(0.952)">MOCAP</div>
<svg class="a" style="left:56px;top:309.55px;" width="10" height="9" viewBox="0 0 10 9"><path d="M3 0.5H9.5L6.5 8.5H0Z" fill="#e6e6e6"/><path d="M0 4.5H4.5" stroke="#d22" stroke-width="1.1"/><path d="M3.5 2.8L6.2 4.5L3.5 6.2Z" fill="#d22"/></svg>
<svg class="a" style="left:48px;top:310.55px;" width="6" height="6" viewBox="0 0 6 6"><rect x="0.5" y="0.5" width="5" height="5" fill="#373737" stroke="#8a8a8a" stroke-width="0.8"/><path d="M1.5 3H4.5" stroke="#999" stroke-width="0.8"/><path d="M3 1.5V4.5" stroke="#999" stroke-width="0.8"/></svg>
<div class="t" style="left:67px;top:309.75px;font-size:7.4px;color:#cfcfcf;transform-origin:0 0;;transform:scaleX(0.889)">OTHER</div>
<svg class="a" style="left:49px;top:321.12px;" width="10" height="9" viewBox="0 0 10 9"><path d="M3 0.5H9.5L6.5 8.5H0Z" fill="#e6e6e6"/><path d="M0 4.5H4.5" stroke="#d22" stroke-width="1.1"/><path d="M3.5 2.8L6.2 4.5L3.5 6.2Z" fill="#d22"/><path d="M1.5 0.2L3.2 1.6L1.5 3L-0.2 1.6Z" fill="#6af"/></svg>
<svg class="a" style="left:41px;top:322.12px;" width="6" height="6" viewBox="0 0 6 6"><rect x="0.5" y="0.5" width="5" height="5" fill="#373737" stroke="#8a8a8a" stroke-width="0.8"/><path d="M1.5 3H4.5" stroke="#999" stroke-width="0.8"/><path d="M3 1.5V4.5" stroke="#999" stroke-width="0.8"/></svg>
<div class="t" style="left:60px;top:321.32px;font-size:7.4px;color:#cfcfcf;transform-origin:0 0;;transform:scaleX(0.957)">xingxuan:ROOT</div>
<svg class="a" style="left:49px;top:332.69px;" width="10" height="9" viewBox="0 0 10 9"><path d="M3 0.5H9.5L6.5 8.5H0Z" fill="#e6e6e6"/><path d="M0 4.5H4.5" stroke="#d22" stroke-width="1.1"/><path d="M3.5 2.8L6.2 4.5L3.5 6.2Z" fill="#d22"/></svg>
<svg class="a" style="left:41px;top:333.69px;" width="6" height="6" viewBox="0 0 6 6"><rect x="0.5" y="0.5" width="5" height="5" fill="#373737" stroke="#8a8a8a" stroke-width="0.8"/><path d="M1.5 3H4.5" stroke="#999" stroke-width="0.8"/><path d="M3 1.5V4.5" stroke="#999" stroke-width="0.8"/></svg>
<div class="t" style="left:60px;top:332.89px;font-size:7.4px;color:#cfcfcf;transform-origin:0 0;;transform:scaleX(1.056)">group1</div>
<svg class="a" style="left:49px;top:344.26px;" width="9" height="9" viewBox="0 0 9 9"><circle cx="4.5" cy="4.5" r="4" fill="none" stroke="#ccc"/><rect x="3" y="3.5" width="3.5" height="3.2" fill="#5bc"/></svg>
<div class="t" style="left:60px;top:344.46px;font-size:7.4px;color:#cfcfcf;transform-origin:0 0;;transform:scaleX(1.014)">defaultLightSet</div>
<svg class="a" style="left:49px;top:355.83px;" width="9" height="9" viewBox="0 0 9 9"><circle cx="4.5" cy="4.5" r="4" fill="none" stroke="#ccc"/><rect x="3" y="3.5" width="3.5" height="3.2" fill="#5bc"/></svg>
<div class="t" style="left:60px;top:356.03px;font-size:7.4px;color:#cfcfcf;transform-origin:0 0;;transform:scaleX(1.025)">defaultObjectSet</div>
<svg class="a" style="left:49px;top:367.4px;" width="9" height="9" viewBox="0 0 9 9"><circle cx="4.5" cy="4.5" r="4" fill="none" stroke="#ccc"/><rect x="3" y="3.5" width="3.5" height="3.2" fill="#5bc"/><path d="M2 0L3.7 1.4L2 2.8L0.3 1.4Z" fill="#6af"/></svg>
<svg class="a" style="left:41px;top:368.4px;" width="6" height="6" viewBox="0 0 6 6"><rect x="0.5" y="0.5" width="5" height="5" fill="#373737" stroke="#8a8a8a" stroke-width="0.8"/><path d="M1.5 3H4.5" stroke="#999" stroke-width="0.8"/><path d="M3 1.5V4.5" stroke="#999" stroke-width="0.8"/></svg>
<div class="t" style="left:60px;top:367.6px;font-size:7.4px;color:#cfcfcf;transform-origin:0 0;;transform:scaleX(0.919)">WYYKJQTX_VWWKVB:Sets</div>
<svg class="a" style="left:49px;top:378.97px;" width="9" height="9" viewBox="0 0 9 9"><path d="M4.5 0.5L8.5 3.5L4.5 8.5L0.5 3.5Z" fill="#6ab8f0"/><path d="M0.5 3.5H8.5" stroke="#aee"/></svg>
<svg class="a" style="left:41px;top:379.97px;" width="6" height="6" viewBox="0 0 6 6"><rect x="0.5" y="0.5" width="5" height="5" fill="#373737" stroke="#8a8a8a" stroke-width="0.8"/><path d="M1.5 3H4.5" stroke="#999" stroke-width="0.8"/><path d="M3 1.5V4.5" stroke="#999" stroke-width="0.8"/></svg>
<div class="t" style="left:60px;top:379.17px;font-size:7.4px;color:#cfcfcf;transform-origin:0 0;;transform:scaleX(0.929)">WYYKJQTX_VWWKVBRN</div>
<svg class="a" style="left:49px;top:390.54px;" width="9" height="9" viewBox="0 0 9 9"><path d="M4.5 0.5L8.5 3.5L4.5 8.5L0.5 3.5Z" fill="#6ab8f0"/><path d="M0.5 3.5H8.5" stroke="#aee"/></svg>
<svg class="a" style="left:41px;top:391.54px;" width="6" height="6" viewBox="0 0 6 6"><rect x="0.5" y="0.5" width="5" height="5" fill="#373737" stroke="#8a8a8a" stroke-width="0.8"/><path d="M1.5 3H4.5" stroke="#999" stroke-width="0.8"/><path d="M3 1.5V4.5" stroke="#999" stroke-width="0.8"/></svg>
<div class="t" style="left:60px;top:390.74px;font-size:7.4px;color:#cfcfcf;transform-origin:0 0;;transform:scaleX(0.846)">ZSSLCJS_GFBPJURN</div>
<svg class="a" style="left:49px;top:402.11px;" width="9" height="9" viewBox="0 0 9 9"><circle cx="4.5" cy="4.5" r="4" fill="none" stroke="#ccc"/><rect x="3" y="3.5" width="3.5" height="3.2" fill="#5bc"/><path d="M2 0L3.7 1.4L2 2.8L0.3 1.4Z" fill="#6af"/></svg>
<svg class="a" style="left:41px;top:403.11px;" width="6" height="6" viewBox="0 0 6 6"><rect x="0.5" y="0.5" width="5" height="5" fill="#373737" stroke="#8a8a8a" stroke-width="0.8"/><path d="M1.5 3H4.5" stroke="#999" stroke-width="0.8"/><path d="M3 1.5V4.5" stroke="#999" stroke-width="0.8"/></svg>
<div class="t" style="left:60px;top:402.31px;font-size:7.4px;color:#cfcfcf;transform-origin:0 0;;transform:scaleX(0.991)">xingxuan:Sets</div>
<svg class="a" style="left:49px;top:413.68px;" width="9" height="9" viewBox="0 0 9 9"><path d="M4.5 0.5L8.5 3.5L4.5 8.5L0.5 3.5Z" fill="#6ab8f0"/><path d="M0.5 3.5H8.5" stroke="#aee"/></svg>
<svg class="a" style="left:41px;top:414.68px;" width="6" height="6" viewBox="0 0 6 6"><rect x="0.5" y="0.5" width="5" height="5" fill="#373737" stroke="#8a8a8a" stroke-width="0.8"/><path d="M1.5 3H4.5" stroke="#999" stroke-width="0.8"/><path d="M3 1.5V4.5" stroke="#999" stroke-width="0.8"/></svg>
<div class="t" style="left:60px;top:413.88px;font-size:7.4px;color:#cfcfcf;transform-origin:0 0;;transform:scaleX(0.993)">xingxuanRN</div>
<div class="a" style="left:179px;top:94px;width:3px;height:428px;background:#3a3a3a;"></div>
<div class="a" style="left:182px;top:95px;width:682px;height:427px;background:#444;border:1px solid #5a5a5a"></div>
<div class="t" style="left:187px;top:98.5px;font-size:7.4px;color:#c8c8c8;">视图</div>
<div class="t" style="left:210px;top:98.5px;font-size:7.4px;color:#c8c8c8;">着色</div>
<div class="t" style="left:232.5px;top:98.5px;font-size:7.4px;color:#c8c8c8;">照明</div>
<div class="t" style="left:255px;top:98.5px;font-size:7.4px;color:#c8c8c8;">显示</div>
<div class="t" style="left:277.5px;top:98.5px;font-size:7.4px;color:#c8c8c8;">渲染器</div>
<div class="t" style="left:307px;top:98.5px;font-size:7.4px;color:#c8c8c8;">面板</div>
<div class="a" style="left:184px;top:109px;width:1px;height:10px;background:#666;"></div>
<svg class="a" style="left:190px;top:110px;" width="9" height="7" viewBox="0 0 9 7"><rect x="0" y="1" width="6" height="5" fill="#ddd"/><path d="M6 3.5L9 1V6Z" fill="#ddd"/></svg>
<svg class="a" style="left:200px;top:109px;" width="10" height="9" viewBox="0 0 10 9"><rect x="3" y="1" width="5" height="4" fill="#ddd"/><path d="M8 3L10 1.5V4.5Z" fill="#ddd"/><circle cx="2.5" cy="6" r="2.2" fill="#2bb"/></svg>
<svg class="a" style="left:211px;top:109px;" width="10" height="9" viewBox="0 0 10 9"><rect x="3" y="1" width="5" height="4" fill="#ddd"/><path d="M8 3L10 1.5V4.5Z" fill="#ddd"/><circle cx="3" cy="6" r="2.2" fill="none" stroke="#2bb"/></svg>
<div class="a" style="left:225px;top:110px;width:3px;height:8px;background:#ccc;"></div>
<svg class="a" style="left:235px;top:109px;" width="9" height="10" viewBox="0 0 9 10"><path d="M7 0L1 8H8Z" fill="#3aa"/><path d="M0 9H9" stroke="#ccc"/></svg>
<svg class="a" style="left:245px;top:109px;" width="9" height="10" viewBox="0 0 9 10"><circle cx="5.5" cy="6" r="2.5" fill="none" stroke="#2bb" stroke-width="1.2"/><path d="M2 1V4M0.5 2.5H3.5" stroke="#ccc"/><path d="M3.5 8L1 10" stroke="#2bb"/></svg>
<svg class="a" style="left:257px;top:109px;" width="9" height="10" viewBox="0 0 9 10"><path d="M8 1L3 7" stroke="#ccc" stroke-width="1.3"/><path d="M3 6L1 9L4 8Z" fill="#2bb"/></svg>
<div class="a" style="left:268px;top:109px;width:1px;height:10px;background:#666;"></div>
<div class="a" style="left:273px;top:109px;width:10px;height:10px;background:#4f86a8;border:1px solid #5a9cc8"></div>
<svg class="a" style="left:273px;top:109px;" width="10" height="10" viewBox="0 0 10 10"><path d="M2 2H8M2 5H8M2 8H8M2 2V8M5 2V8M8 2V8" stroke="#ddd"/></svg>
<div class="a" style="left:285px;top:109px;width:10px;height:10px;background:transparent;border:1px solid #999"></div>
<svg class="a" style="left:285px;top:109px;" width="10" height="10" viewBox="0 0 10 10"><rect x="1" y="2" width="8" height="6" fill="none" stroke="#ccc"/><path d="M1 4H9" stroke="#ccc"/></svg>
<div class="a" style="left:296px;top:109px;width:10px;height:10px;background:transparent;border:1px solid #999"></div>
<svg class="a" style="left:296px;top:109px;" width="10" height="10" viewBox="0 0 10 10"><circle cx="5" cy="5" r="1.8" fill="#3cc"/></svg>
<div class="a" style="left:307px;top:109px;width:10px;height:10px;background:#3a3a3a;border:1px solid #999"></div>
<svg class="a" style="left:307px;top:109px;" width="10" height="10" viewBox="0 0 10 10"></svg>
<div class="a" style="left:318px;top:109px;width:10px;height:10px;background:transparent;border:1px solid #999"></div>
<svg class="a" style="left:318px;top:109px;" width="10" height="10" viewBox="0 0 10 10"><path d="M1 5H3M7 5H9M5 1V3M5 7V9" stroke="#ccc"/><rect x="4" y="4" width="2" height="2" fill="#3cc"/></svg>
<div class="a" style="left:330px;top:109px;width:10px;height:10px;background:transparent;border:1px solid #999"></div>
<svg class="a" style="left:330px;top:109px;" width="10" height="10" viewBox="0 0 10 10"><path d="M2 8L8 2" stroke="#3cc" stroke-width="2"/></svg>
<div class="a" style="left:341px;top:109px;width:10px;height:10px;background:transparent;border:1px solid #999"></div>
<svg class="a" style="left:341px;top:109px;" width="10" height="10" viewBox="0 0 10 10"><path d="M2.5 2.5H7.5M5 2.5V8" stroke="#3cc" stroke-width="1.4"/></svg>
<div class="a" style="left:352px;top:109px;width:1px;height:10px;background:#666;"></div>
<svg class="a" style="left:356px;top:109px;" width="10" height="10" viewBox="0 0 10 10"><path d="M5 1L9 3V7L5 9L1 7V3Z" fill="none" stroke="#bbb"/><path d="M1 3L5 5L9 3M5 5V9" stroke="#bbb"/></svg>
<svg class="a" style="left:378px;top:109px;" width="10" height="10" viewBox="0 0 10 10"><circle cx="5" cy="5" r="4" fill="#ddd"/><path d="M5 1A4 4 0 0 1 5 9Z" fill="#888"/></svg>
<svg class="a" style="left:392px;top:109px;" width="10" height="10" viewBox="0 0 10 10"><path d="M5 1L9 3V7L5 9L1 7V3Z" fill="none" stroke="#bbb"/><path d="M3 4L5 5L7 4V7L5 8L3 7Z" fill="#3cc"/></svg>
<svg class="a" style="left:414px;top:109px;" width="10" height="10" viewBox="0 0 10 10"><path d="M5 1A3 3 0 0 1 7 6V8H3V6A3 3 0 0 1 5 1Z" fill="#ddd"/><path d="M0 2L1.5 3M10 2L8.5 3M5 0V-1" stroke="#ddd"/></svg>
<svg class="a" style="left:424px;top:109px;" width="10" height="10" viewBox="0 0 10 10"><circle cx="6" cy="4.5" r="3.2" fill="#3bc"/><ellipse cx="3.5" cy="8" rx="3.5" ry="1.5" fill="#999"/></svg>
<div class="a" style="left:366px;top:108px;width:11px;height:12px;background:#4f86a8;"></div>
<svg class="a" style="left:367px;top:109px;" width="10" height="10" viewBox="0 0 10 10"><path d="M5 1L9 3V7L5 9L1 7V3Z" fill="#5cd" stroke="#2a7a8a"/><path d="M1 3L5 5L9 3M5 5V9" stroke="#2a7a8a"/></svg>
<div class="a" style="left:400px;top:108px;width:11px;height:12px;background:#4f86a8;"></div>
<svg class="a" style="left:401px;top:109px;" width="10" height="10" viewBox="0 0 10 10"><circle cx="5" cy="5" r="4" fill="#aaa"/><path d="M2 3L8 7M2 7L8 3M1 5H9M5 1V9" stroke="#666" stroke-width="0.7"/></svg>
<div class="a" style="left:435px;top:109px;width:1px;height:10px;background:#666;"></div>
<svg class="a" style="left:442px;top:109px;" width="9" height="10" viewBox="0 0 9 10"><circle cx="4.5" cy="4" r="3.5" fill="#ddd"/><ellipse cx="4.5" cy="8.5" rx="4" ry="1.2" fill="#3aa"/></svg>
<svg class="a" style="left:452px;top:109px;" width="9" height="10" viewBox="0 0 9 10"><circle cx="5.5" cy="3.5" r="3" fill="#ccc"/><circle cx="3.5" cy="6.5" r="3" fill="#888"/></svg>
<svg class="a" style="left:464px;top:109px;" width="9" height="10" viewBox="0 0 9 10"><path d="M4 1A4 4 0 0 0 4 9" stroke="#3cc" stroke-width="1.4" fill="none"/><path d="M5 1L9 5L5 9" stroke="#ccc" fill="none"/></svg>
<div class="a" style="left:473px;top:109px;width:9px;height:10px;background:#3a3a3a;"></div>
<div class="a" style="left:475px;top:111px;width:5px;height:6px;background:#3d5a5a;"></div>
<div class="a" style="left:485px;top:109px;width:1px;height:10px;background:#666;"></div>
<svg class="a" style="left:489px;top:109px;" width="9" height="10" viewBox="0 0 9 10"><rect x="0.5" y="0.5" width="5" height="6" fill="none" stroke="#3cc" stroke-dasharray="1 1"/><path d="M4 3L8 9L6 9.5Z" fill="#ddd"/></svg>
<div class="a" style="left:502px;top:109px;width:1px;height:10px;background:#666;"></div>
<svg class="a" style="left:507px;top:109px;" width="10" height="10" viewBox="0 0 10 10"><rect x="0.5" y="3.5" width="6" height="6" fill="none" stroke="#ddd"/><rect x="3.5" y="0.5" width="6" height="6" fill="none" stroke="#ddd"/></svg>
<svg class="a" style="left:519px;top:109px;" width="10" height="10" viewBox="0 0 10 10"><rect x="0" y="3" width="7" height="7" fill="#ddd"/><rect x="3.5" y="0.5" width="6" height="6" fill="none" stroke="#999"/></svg>
<svg class="a" style="left:533px;top:109px;" width="9" height="10" viewBox="0 0 9 10"><rect x="0.5" y="0.5" width="8" height="8" fill="none" stroke="#ccc"/><path d="M2 2L7 7" stroke="#ccc"/></svg>
<div class="a" style="left:542px;top:109px;width:1px;height:10px;background:#666;"></div>
<svg class="a" style="left:548px;top:109px;" width="9" height="10" viewBox="0 0 9 10"><circle cx="4.5" cy="5" r="3.6" fill="none" stroke="#ccc" stroke-width="1.6" stroke-dasharray="1.6 0.9"/></svg>
<div class="a" style="left:558px;top:109.5px;width:22px;height:8px;background:#2b2b2b;"></div>
<div class="t" style="left:561px;top:110.5px;font-size:7px;color:#ccc;">0.00</div>
<svg class="a" style="left:585px;top:109px;" width="7" height="10" viewBox="0 0 7 10"><path d="M3 1A4 4 0 0 0 3 9Z" fill="#ddd"/><rect x="3.5" y="2" width="3" height="6" fill="#ddd"/></svg>
<div class="a" style="left:593px;top:109.5px;width:22px;height:8px;background:#2b2b2b;"></div>
<div class="t" style="left:597px;top:110.5px;font-size:7px;color:#ccc;">1.00</div>
<div class="a" style="left:617px;top:109px;width:11px;height:10px;background:#4f86a8;"></div>
<svg class="a" style="left:618px;top:109.5px;" width="9" height="9" viewBox="0 0 9 9"><circle cx="4.5" cy="4.5" r="3.8" fill="#3cc" stroke="#2a6"/><path d="M2 4.5H7" stroke="#255" stroke-width="1.2"/></svg>
<div class="a" style="left:629px;top:109px;width:102px;height:9.5px;background:#555;"></div>
<div class="a" style="left:720px;top:109px;width:1px;height:9.5px;background:#4a4a4a;"></div>
<div class="t" style="left:631px;top:110.5px;font-size:7.2px;color:#ddd;">sRGB gamma</div>
<svg class="a" style="left:723px;top:112px;" width="6" height="4" viewBox="0 0 6 4"><path d="M0 0H6L3 3.5Z" fill="#ccc"/></svg>
<svg class="a" style="left:183px;top:120px;" width="680" height="402" viewBox="0 0 680 402"><rect width="680" height="402" fill="#c8c8c8"/><rect width="680" height="20" fill="#d3d3d3"/><defs><linearGradient id="g1" x1="0" y1="0" x2="0" y2="1"><stop offset="0" stop-color="#d0d0d0"/><stop offset="0.35" stop-color="#9a9a9a"/><stop offset="1" stop-color="#5a5a5a"/></linearGradient></defs><path d="M0 19.5L147 15L147 14L229 14L229 41.2L0 54.5Z" fill="#676767"/><path d="M0 19.8L147 15.3" stroke="#bdbdbd" stroke-width="1" stroke-dasharray="9 5 14 6"/><path d="M0 26.5L138 22.5" stroke="#c6c6c6" stroke-width="3" stroke-dasharray="40 2 30 3 50 2"/><path d="M133 22L166 32M135 25.5L166 35M137 29L166 38" stroke="#d4d4d4" stroke-width="1.3"/><path d="M140 43L145 37L166 33" stroke="#d0d0d0" stroke-width="1.5" fill="none"/><rect x="144.4" y="0" width="7" height="19" fill="#e9e9e9"/><rect x="151.4" y="0" width="3.5" height="19" fill="#a8a8a8"/><rect x="155" y="0" width="29" height="14.3" fill="#dedede"/><rect x="184.3" y="0" width="45" height="13.8" fill="url(#g1)"/><rect x="163.3" y="14" width="4.3" height="25" fill="#cfcfcf"/><rect x="168.7" y="12" width="8.6" height="30" fill="#8c8c8c"/><rect x="177.3" y="13" width="52" height="3.5" fill="#e4e4e4"/><rect x="177.3" y="16.5" width="52" height="24.7" fill="#c0c0c0"/><path d="M515 14.8L680 20.3V54.9L515 43Z" fill="#6a6a6a"/><path d="M515 19.8L680 26.8" stroke="#b4b4b4" stroke-width="1.2" stroke-dasharray="30 3 22 4"/><path d="M0 54.5L170 42.5L237 40.8" fill="none" stroke="#e6e6e6" stroke-width="1.3"/><path d="M515 43L680 54.9" fill="none" stroke="#e6e6e6" stroke-width="1.3"/><ellipse cx="343.5" cy="208" rx="323" ry="93" fill="none" stroke="#ababab" stroke-width="1"/><ellipse cx="343.5" cy="210" rx="320" ry="92" fill="none" stroke="#dedede" stroke-width="1.2"/><ellipse cx="343.5" cy="205" rx="315" ry="89" fill="none" stroke="#c0c0c0" stroke-width="0.8"/><ellipse cx="342" cy="176" rx="223" ry="74" fill="none" stroke="#b8b8b8" stroke-width="0.9"/><ellipse cx="342" cy="177.5" rx="221" ry="73" fill="none" stroke="#d8d8d8" stroke-width="0.9"/><ellipse cx="342" cy="176" rx="203" ry="66" fill="none" stroke="#b5b5b5" stroke-width="0.9"/><ellipse cx="342" cy="178" rx="201" ry="65" fill="none" stroke="#dadada" stroke-width="0.9"/><ellipse cx="342" cy="174" rx="190" ry="55" fill="none" stroke="#7a7a7a" stroke-width="1.6"/><ellipse cx="342" cy="177" rx="186" ry="54" fill="none" stroke="#ececec" stroke-width="2.4"/><ellipse cx="342" cy="176" rx="178" ry="50" fill="none" stroke="#bcbcbc" stroke-width="1"/><ellipse cx="342" cy="177" rx="158" ry="45" fill="none" stroke="#b0b0b0" stroke-width="0.9"/><path d="M10 120Q60 100 120 110M30 150Q80 135 140 140M60 72Q120 60 200 66M40 180L110 165" stroke="#d0d0d0" stroke-width="1" fill="none"/><path d="M0 85Q100 68 229 62" stroke="#d2d2d2" stroke-width="1" fill="none"/><path d="M540 148Q600 140 650 150M560 160Q590 165 620 158" stroke="#d0d0d0" stroke-width="1" fill="none"/><path d="M668 212Q640 300 612 402" stroke="#cdcdcd" stroke-width="24" fill="none"/><path d="M676 205Q645 300 618 402" stroke="#d3d3d3" stroke-width="9" fill="none"/><path d="M660 205Q628 300 600 402" stroke="#c2c2c2" stroke-width="1" fill="none"/><path d="M0 246Q120 273 240 308" stroke="#cecece" stroke-width="9" fill="none"/><path d="M0 243Q120 270 240 305" stroke="#d4d4d4" stroke-width="3" fill="none"/><path d="M0 240Q120 267 240 302" stroke="#bebebe" stroke-width="1" fill="none"/><path d="M0 325Q30 320 60 318M20 327Q40 340 0 350M0 352Q15 356 33 350M0 363Q8 360 14 364" stroke="#d8d8d8" stroke-width="1.2" fill="none"/><path d="M0 327Q30 322 60 320M0 354Q15 358 33 352" stroke="#bababa" stroke-width="0.8" fill="none"/></svg>
<svg class="a" style="left:193px;top:493px;" width="16" height="15" viewBox="0 0 16 15"><path d="M4 12V4" stroke="#3c3"/><path d="M4 12H10" stroke="#e33"/><path d="M4 12L2.5 13.5" stroke="#33e" stroke-width="1.5"/><path d="M2.5 0.5L4 2.5L5.5 0.5M4 2.5V4" stroke="#3c3" stroke-width="0.8" fill="none"/><path d="M11 8.5L14 11.5M14 8.5L11 11.5" stroke="#e33" stroke-width="0.9"/></svg>
<div class="t" style="left:510px;top:511px;font-size:6.2px;color:#f4f4f4;font-weight:bold">persp</div>
<div class="a" style="left:182px;top:521px;width:682px;height:1px;background:#444;"></div>
<div class="a" style="left:412px;top:121px;width:287px;height:374px;background:#454545;border-radius:3px;box-shadow:0 0 2px rgba(0,0,0,.4)"></div>
<div class="t" style="left:422px;top:130px;font-size:13.6px;color:#e6e6e6;font-family:'Liberation Serif',serif">加载动捕数据</div>
<div class="t" style="left:509px;top:130.5px;font-size:13px;color:#e6e6e6;">Tool</div>
<svg class="a" style="left:678px;top:131px;" width="10" height="10" viewBox="0 0 10 10"><path d="M0.5 0.5L9.5 9.5M9.5 0.5L0.5 9.5" stroke="#ccc" stroke-width="1.1"/></svg>
<div class="t" style="left:420px;top:157px;font-size:7px;color:#cfcfcf;">动捕数据路径:</div>
<div class="a" style="left:473px;top:151px;width:219px;height:18px;background:#2b2b2b;"></div>
<div class="t" style="left:474.5px;top:156.5px;font-size:7.4px;color:#ddd;transform-origin:0 0;;transform:scaleX(0.954)">odiyiji\publish\sequence\EP050\seq040\mocap\motion_track\fbx</div>
<svg class="a" style="left:681px;top:155px;" width="11" height="9" viewBox="0 0 11 9"><path d="M0.5 0.5H4L5 2H10.5V8.5H0.5Z" fill="none" stroke="#ccc"/></svg>
<div class="a" style="left:469px;top:142px;width:225px;height:30px;background:transparent;border:2px solid #d71d1d"></div>
<div class="a" style="left:417px;top:173px;width:276px;height:292px;background:#323232;"></div>
<svg class="a" style="left:419px;top:180px;" width="7" height="6" viewBox="0 0 7 6"><path d="M0 0H7L3.5 6Z" fill="#eee"/></svg>
<div class="a" style="left:429px;top:177px;width:264px;height:14px;background:#535353;"></div>
<div class="t" style="left:430px;top:180.5px;font-size:7px;color:#f0f0f0;font-weight:bold">动作数据</div>
<div class="a" style="left:418px;top:194px;width:23px;height:22px;background:#37475a;"></div>
<div class="a" style="left:441px;top:194px;width:252px;height:22px;background:#ff8c00;"></div>
<svg class="a" style="left:448px;top:199px;" width="8" height="12" viewBox="0 0 8 12"><circle cx="4.5" cy="1.5" r="1.4" fill="#a0a0a0"/><path d="M4.2 3.5L3.2 7.5L1.5 11.5M3.5 7.5L5.5 9L6 11.5M4.2 4.5L2.3 6.8M4.2 4.5L6.5 6.5" stroke="#a0a0a0" stroke-width="1.2" fill="none"/></svg>
<div class="t" style="left:462px;top:201.5px;font-size:7.4px;color:#1b1b1b;font-weight:bold">xingxuan</div>
<div class="a" style="left:441px;top:220px;width:252px;height:23px;background:#484848;"></div>
<svg class="a" style="left:448px;top:226px;" width="8" height="12" viewBox="0 0 8 12"><circle cx="4.5" cy="1.5" r="1.4" fill="#eee"/><path d="M4.2 3.5L3.2 7.5L1.5 11.5M3.5 7.5L5.5 9L6 11.5M4.2 4.5L2.3 6.8M4.2 4.5L6.5 6.5" stroke="#eee" stroke-width="1.2" fill="none"/></svg>
<div class="t" style="left:462.5px;top:228.5px;font-size:7.4px;color:#e8e8e8;transform-origin:0 0;font-weight:bold;transform:scaleX(0.920)">LGCK_GUUAXC</div>
<div class="a" style="left:429px;top:246px;width:264px;height:15px;background:#535353;"></div>
<div class="t" style="left:430px;top:250px;font-size:7px;color:#f0f0f0;font-weight:bold">表情数据</div>
<div class="a" style="left:428.5px;top:195px;width:278.5px;height:23px;background:transparent;border:2px solid #d71d1d"></div>
<div class="a" style="left:417px;top:469px;width:136px;height:23px;background:#ff8c00;border:2px solid #d71d1d"></div>
<div class="t" style="left:417px;top:477px;font-size:7px;color:#fff;width:136px;text-align:center">导入动捕数据</div>
<div class="a" style="left:558px;top:470px;width:135px;height:21px;background:#f9a81b;"></div>
<div class="t" style="left:558px;top:477px;font-size:7px;color:#fff;width:135px;text-align:center">导入表情数据</div>
<div class="a" style="left:864px;top:94px;width:2px;height:429px;background:#3a3a3a;"></div>
<div class="a" style="left:866px;top:94px;width:233px;height:429px;background:#444;"></div>
<div class="f" style="left:871px;top:100.5px;font-size:7.4px;color:#ccc;gap:9px"><span>动画</span><span>模型</span><span>绑定</span><span>解算</span><span style="color:#f39c12">预演</span></div>
<div class="a" style="left:866px;top:113.5px;width:233px;height:1px;background:#505050;"></div>
<div class="a" style="left:959px;top:113px;width:24px;height:1.2px;background:#f39c12;"></div>
<div class="a" style="left:868px;top:120.0px;width:230px;height:20px;background:#4a4a4a;border:1px solid #27a5a2;border-radius:1px"></div>
<div class="t" style="left:872px;top:126.2px;font-size:7.5px;color:#d8d8d8;">自动加载动捕数据</div>
<div class="a" style="left:868px;top:145.4px;width:230px;height:20px;background:#4a4a4a;border:1px solid #27a5a2;border-radius:1px"></div>
<div class="t" style="left:872px;top:151.6px;font-size:7.5px;color:#d8d8d8;">组装制作文件</div>
<div class="a" style="left:868px;top:170.8px;width:230px;height:20px;background:#4a4a4a;border:1px solid #27a5a2;border-radius:1px"></div>
<div class="t" style="left:872px;top:177.0px;font-size:7.5px;color:#d8d8d8;">加载面捕数据</div>
<div class="a" style="left:868px;top:196.2px;width:230px;height:20px;background:#4a4a4a;border:1px solid #27a5a2;border-radius:1px"></div>
<div class="t" style="left:872px;top:202.4px;font-size:7.5px;color:#d8d8d8;">简化动画曲线工具</div>
<div class="a" style="left:868px;top:221.6px;width:230px;height:20px;background:#4a4a4a;border:1px solid #27a5a2;border-radius:1px"></div>
<div class="t" style="left:872px;top:227.8px;font-size:7.5px;color:#d8d8d8;">参考关联资产工具</div>
<div class="a" style="left:868px;top:247.0px;width:230px;height:20px;background:#4a4a4a;border:1px solid #27a5a2;border-radius:1px"></div>
<div class="t" style="left:872px;top:253.2px;font-size:7.5px;color:#d8d8d8;">提交农场导出fbx工具</div>
<svg class="a" style="left:1083px;top:124px;" width="10" height="11" viewBox="0 0 10 11"><path d="M0 0H10V8H6L5 10L4 8H0Z" fill="#c8c8c8"/><path d="M3.5 3A1.5 1.5 0 1 1 5 4.5V5.5M5 6.5V7.3" stroke="#666" stroke-width="1" fill="none"/></svg>
<div class="a" style="left:1099px;top:92px;width:11px;height:431px;background:#3a3a3a;"></div>
<div class="a" style="left:1099px;top:254px;width:11px;height:63px;background:#444;"></div>
<div class="a" style="left:1099px;top:157px;width:11px;height:1px;background:#333;"></div>
<div class="a" style="left:1099px;top:207px;width:11px;height:1px;background:#333;"></div>
<div class="a" style="left:1099px;top:252px;width:11px;height:1px;background:#333;"></div>
<div class="a" style="left:1099px;top:318px;width:11px;height:1px;background:#333;"></div>
<div class="a" style="left:1099px;top:386px;width:11px;height:1px;background:#333;"></div>
<div class="t" style="left:1107.5px;top:100.5px;font-size:6.6px;color:#9a9a9a;transform-origin:0 0;transform:rotate(90deg) scaleX(0.887)">骨骼动画/自动绑定</div>
<div class="t" style="left:1107.5px;top:165px;font-size:6.6px;color:#9a9a9a;transform-origin:0 0;transform:rotate(90deg) scaleX(1.014)">动画工具包</div>
<div class="t" style="left:1107.5px;top:213.7px;font-size:6.6px;color:#9a9a9a;transform-origin:0 0;transform:rotate(90deg) scaleX(1.082)">角色组件</div>
<div class="t" style="left:1107.5px;top:262.4px;font-size:6.6px;color:#e6e6e6;transform-origin:0 0;transform:rotate(90deg) scaleX(1.119)">TeamonesTools</div>
<div class="t" style="left:1107.5px;top:326.8px;font-size:6.6px;color:#8a8a8a;transform-origin:0 0;transform:rotate(90deg) scaleX(1.124)">Teamones Panel</div>
<div class="a" style="left:0px;top:522px;width:1110px;height:3px;background:#3a3a3a;"></div>
<div class="a" style="left:1px;top:526px;width:3px;height:16px;background:repeating-linear-gradient(#5c5c5c 0 1px,transparent 1px 2px);"></div>
<div class="a" style="left:7px;top:526px;width:933px;height:17px;background:#2b2b2b;"></div>
<div class="a" style="left:12.0px;top:536px;width:1px;height:7px;background:#aaa;"></div>
<div class="t" style="left:11.7px;top:528px;font-size:6.6px;color:#9a9a9a;">0</div>
<div class="a" style="left:44.0px;top:536px;width:1px;height:7px;background:#aaa;"></div>
<div class="t" style="left:43.7px;top:528px;font-size:6.6px;color:#9a9a9a;">20</div>
<div class="a" style="left:76.0px;top:536px;width:1px;height:7px;background:#aaa;"></div>
<div class="t" style="left:75.7px;top:528px;font-size:6.6px;color:#9a9a9a;">40</div>
<div class="a" style="left:108.0px;top:536px;width:1px;height:7px;background:#aaa;"></div>
<div class="t" style="left:107.7px;top:528px;font-size:6.6px;color:#9a9a9a;">60</div>
<div class="a" style="left:140.0px;top:536px;width:1px;height:7px;background:#aaa;"></div>
<div class="t" style="left:139.7px;top:528px;font-size:6.6px;color:#9a9a9a;">80</div>
<div class="a" style="left:172.0px;top:536px;width:1px;height:7px;background:#aaa;"></div>
<div class="t" style="left:171.7px;top:528px;font-size:6.6px;color:#9a9a9a;">100</div>
<div class="a" style="left:204.0px;top:536px;width:1px;height:7px;background:#aaa;"></div>
<div class="t" style="left:203.7px;top:528px;font-size:6.6px;color:#9a9a9a;">120</div>
<div class="a" style="left:236.0px;top:536px;width:1px;height:7px;background:#aaa;"></div>
<div class="t" style="left:235.7px;top:528px;font-size:6.6px;color:#9a9a9a;">140</div>
<div class="a" style="left:268.0px;top:536px;width:1px;height:7px;background:#aaa;"></div>
<div class="t" style="left:267.7px;top:528px;font-size:6.6px;color:#9a9a9a;">160</div>
<div class="a" style="left:300.0px;top:536px;width:1px;height:7px;background:#aaa;"></div>
<div class="t" style="left:299.7px;top:528px;font-size:6.6px;color:#9a9a9a;">180</div>
<div class="a" style="left:332.0px;top:536px;width:1px;height:7px;background:#aaa;"></div>
<div class="t" style="left:331.7px;top:528px;font-size:6.6px;color:#9a9a9a;">200</div>
<div class="a" style="left:364.0px;top:536px;width:1px;height:7px;background:#aaa;"></div>
<div class="t" style="left:363.7px;top:528px;font-size:6.6px;color:#9a9a9a;">220</div>
<div class="a" style="left:396.0px;top:536px;width:1px;height:7px;background:#aaa;"></div>
<div class="t" style="left:395.7px;top:528px;font-size:6.6px;color:#9a9a9a;">240</div>
<div class="a" style="left:428.0px;top:536px;width:1px;height:7px;background:#aaa;"></div>
<div class="t" style="left:427.7px;top:528px;font-size:6.6px;color:#9a9a9a;">260</div>
<div class="a" style="left:460.0px;top:536px;width:1px;height:7px;background:#aaa;"></div>
<div class="t" style="left:459.7px;top:528px;font-size:6.6px;color:#9a9a9a;">280</div>
<div class="a" style="left:492.0px;top:536px;width:1px;height:7px;background:#aaa;"></div>
<div class="t" style="left:491.7px;top:528px;font-size:6.6px;color:#9a9a9a;">300</div>
<div class="a" style="left:524.0px;top:536px;width:1px;height:7px;background:#aaa;"></div>
<div class="t" style="left:523.7px;top:528px;font-size:6.6px;color:#9a9a9a;">320</div>
<div class="a" style="left:556.0px;top:536px;width:1px;height:7px;background:#aaa;"></div>
<div class="t" style="left:555.7px;top:528px;font-size:6.6px;color:#9a9a9a;">340</div>
<div class="a" style="left:588.0px;top:536px;width:1px;height:7px;background:#aaa;"></div>
<div class="t" style="left:587.7px;top:528px;font-size:6.6px;color:#9a9a9a;">360</div>
<div class="a" style="left:620.0px;top:536px;width:1px;height:7px;background:#aaa;"></div>
<div class="t" style="left:619.7px;top:528px;font-size:6.6px;color:#9a9a9a;">380</div>
<div class="a" style="left:652.0px;top:536px;width:1px;height:7px;background:#aaa;"></div>
<div class="t" style="left:651.7px;top:528px;font-size:6.6px;color:#9a9a9a;">400</div>
<div class="a" style="left:684.0px;top:536px;width:1px;height:7px;background:#aaa;"></div>
<div class="t" style="left:683.7px;top:528px;font-size:6.6px;color:#9a9a9a;">420</div>
<div class="a" style="left:716.0px;top:536px;width:1px;height:7px;background:#aaa;"></div>
<div class="t" style="left:715.7px;top:528px;font-size:6.6px;color:#9a9a9a;">440</div>
<div class="a" style="left:748.0px;top:536px;width:1px;height:7px;background:#aaa;"></div>
<div class="t" style="left:747.7px;top:528px;font-size:6.6px;color:#9a9a9a;">460</div>
<div class="a" style="left:780.0px;top:536px;width:1px;height:7px;background:#aaa;"></div>
<div class="t" style="left:779.7px;top:528px;font-size:6.6px;color:#9a9a9a;">480</div>
<div class="a" style="left:812.0px;top:536px;width:1px;height:7px;background:#aaa;"></div>
<div class="t" style="left:811.7px;top:528px;font-size:6.6px;color:#9a9a9a;">500</div>
<div class="a" style="left:844.0px;top:536px;width:1px;height:7px;background:#aaa;"></div>
<div class="t" style="left:843.7px;top:528px;font-size:6.6px;color:#9a9a9a;">520</div>
<div class="a" style="left:876.0px;top:536px;width:1px;height:7px;background:#aaa;"></div>
<div class="t" style="left:875.7px;top:528px;font-size:6.6px;color:#9a9a9a;">540</div>
<div class="a" style="left:908.0px;top:536px;width:1px;height:7px;background:#aaa;"></div>
<div class="t" style="left:907.7px;top:528px;font-size:6.6px;color:#9a9a9a;">560</div>
<div class="t" style="left:12px;top:533.5px;font-size:7.6px;color:#f2f2f2;transform-origin:0 0;;transform:scaleX(0.962)">-0.21*</div>
<div class="a" style="left:944px;top:530px;width:50px;height:12px;background:#2b2b2b;"></div>
<div class="t" style="left:947px;top:533px;font-size:7px;color:#ddd;">-0.21*</div>
<svg class="a" style="left:1000.0px;top:531px;" width="10" height="10" viewBox="0 0 10 10"><path d="M0 1V9M1 5L5 1V9Z M5 5L9 1V9Z" stroke="#ccc" fill="#ccc" stroke-width="0.8"/></svg>
<svg class="a" style="left:1013.4px;top:531px;" width="10" height="10" viewBox="0 0 10 10"><path d="M0.5 1V9" stroke="#ccc" stroke-width="1.2"/><path d="M8 1L2 5L8 9Z" fill="#ccc"/></svg>
<svg class="a" style="left:1026.8px;top:531px;" width="10" height="10" viewBox="0 0 10 10"><path d="M1.5 0V10" stroke="#f08c2c" stroke-width="1.4"/><path d="M3 5L8 1V9Z" fill="#ccc"/></svg>
<svg class="a" style="left:1040.2px;top:531px;" width="10" height="10" viewBox="0 0 10 10"><path d="M8 0.5L1.5 5L8 9.5Z" fill="#ccc"/></svg>
<svg class="a" style="left:1053.6px;top:531px;" width="10" height="10" viewBox="0 0 10 10"><path d="M1.5 0.5L8 5L1.5 9.5Z" fill="#ccc"/></svg>
<svg class="a" style="left:1067.0px;top:531px;" width="10" height="10" viewBox="0 0 10 10"><path d="M7.5 0V10" stroke="#f08c2c" stroke-width="1.4"/><path d="M1 1L6 5L1 9Z" fill="#ccc"/></svg>
<svg class="a" style="left:1080.4px;top:531px;" width="10" height="10" viewBox="0 0 10 10"><path d="M8.5 1V9" stroke="#ccc" stroke-width="1.2"/><path d="M1 1L7 5L1 9Z" fill="#ccc"/></svg>
<svg class="a" style="left:1093.8px;top:531px;" width="10" height="10" viewBox="0 0 10 10"><path d="M9 1V9M0 1L4 5L0 9Z M4 1L8 5L4 9Z" stroke="#ccc" fill="#ccc" stroke-width="0.8"/></svg>
<div class="a" style="left:0px;top:545px;width:1110px;height:2px;background:#3a3a3a;"></div>
<div class="a" style="left:1px;top:548px;width:3px;height:16px;background:repeating-linear-gradient(#5c5c5c 0 1px,transparent 1px 2px);"></div>
<div class="a" style="left:8px;top:548px;width:51px;height:17px;background:#2b2b2b;border-radius:1px"></div>
<div class="t" style="left:12px;top:553px;font-size:7.2px;color:#ddd;">0</div>
<div class="a" style="left:64px;top:548px;width:51px;height:17px;background:#2b2b2b;"></div>
<div class="t" style="left:68px;top:553px;font-size:7.2px;color:#ddd;">0</div>
<div class="a" style="left:119px;top:547px;width:1px;height:18px;background:#3a3a3a;"></div>
<div class="a" style="left:122px;top:548px;width:578px;height:17px;background:#5a5a5a;border-radius:3px"></div>
<div class="a" style="left:124px;top:550px;width:9px;height:11px;background:#9a9a9a;border-radius:2px"></div>
<div class="t" style="left:136px;top:553px;font-size:7.2px;color:#ddd;">0</div>
<div class="a" style="left:688px;top:550px;width:9px;height:11px;background:#9a9a9a;border-radius:2px"></div>
<div class="t" style="left:659px;top:553px;font-size:7.2px;color:#ddd;">576.04</div>
<div class="a" style="left:708px;top:548px;width:51px;height:17px;background:#2b2b2b;"></div>
<div class="t" style="left:711px;top:553px;font-size:7.2px;color:#ddd;">576.04*</div>
<div class="a" style="left:764px;top:548px;width:51px;height:17px;background:#2b2b2b;"></div>
<div class="t" style="left:767px;top:553px;font-size:7.2px;color:#ddd;">576.04*</div>
<div class="a" style="left:819px;top:549px;width:1px;height:14px;background:#777;"></div>
<svg class="a" style="left:826px;top:553px;" width="6" height="4" viewBox="0 0 6 4"><path d="M0 0H6L3 3.5Z" fill="#999"/></svg>
<div class="a" style="left:836px;top:548px;width:59px;height:17px;background:#3f3f3f;border:1px solid #4a4a4a"></div>
<div class="t" style="left:839px;top:553px;font-size:7.2px;color:#ccc;">无角色集</div>
<svg class="a" style="left:901px;top:553px;" width="6" height="4" viewBox="0 0 6 4"><path d="M0 0H6L3 3.5Z" fill="#999"/></svg>
<div class="a" style="left:911px;top:548px;width:59px;height:17px;background:#3f3f3f;border:1px solid #4a4a4a"></div>
<div class="t" style="left:914px;top:553px;font-size:7.2px;color:#ccc;">AnimLayer1</div>
<div class="a" style="left:975px;top:550px;width:1px;height:13px;background:#777;"></div>
<div class="a" style="left:984px;top:550px;width:59px;height:13px;background:#5a5a5a;"></div>
<div class="a" style="left:1031px;top:550px;width:1px;height:13px;background:#4a4a4a;"></div>
<div class="t" style="left:987px;top:553px;font-size:7.2px;color:#ddd;">25 fps</div>
<svg class="a" style="left:1034px;top:554px;" width="6" height="4" viewBox="0 0 6 4"><path d="M0 0H6L3 3.5Z" fill="#ccc"/></svg>
<svg class="a" style="left:1050px;top:551px;" width="12" height="9" viewBox="0 0 12 9"><path d="M2 4V3A1.5 1.5 0 0 1 3.5 1.5H10M8 0L10 1.5L8 3M10 5V6A1.5 1.5 0 0 1 8.5 7.5H2M4 9L2 7.5L4 6" stroke="#ddd" stroke-width="1.2" fill="none"/></svg>
<div class="a" style="left:1069px;top:550px;width:1px;height:13px;background:#777;"></div>
<svg class="a" style="left:1076px;top:550px;" width="11" height="12" viewBox="0 0 11 12"><circle cx="5.5" cy="6" r="4.5" fill="none" stroke="#ccc" stroke-dasharray="5 2"/><path d="M5.5 3V8" stroke="#f08c2c" stroke-width="1.4"/></svg>
<svg class="a" style="left:1093px;top:549px;" width="12" height="13" viewBox="0 0 12 13"><circle cx="3" cy="3" r="2" fill="none" stroke="#ccc"/><circle cx="8" cy="3" r="1.3" fill="#f08c2c"/><path d="M8 4.5L6 8L3 9M6 8L9 12M7 6L10 7" stroke="#f08c2c" stroke-width="1.5" fill="none"/></svg>
<div class="a" style="left:0px;top:567px;width:1110px;height:2px;background:#3a3a3a;"></div>
<div class="a" style="left:1px;top:570px;width:3px;height:14px;background:repeating-linear-gradient(#5c5c5c 0 1px,transparent 1px 2px);"></div>
<div class="t" style="left:8px;top:574.5px;font-size:7.4px;color:#d0d0d0;">Python</div>
<div class="a" style="left:34px;top:571px;width:260px;height:13px;background:#2b2b2b;"></div>
<div class="t" style="left:35px;top:574px;font-size:7.6px;color:#ddd;">G:/temp_folder/HuangKai/tools");import ref_tools.code;ref_tools.code.main()</div>
<div class="a" style="left:298px;top:571px;width:793px;height:13px;background:#2b2b2b;"></div>
<div class="t" style="left:302px;top:574px;font-size:7.4px;color:#ddd;">// 已创建新角色 &nbsp;"xingxuan_mocap1_hik" 。</div>
<svg class="a" style="left:1095px;top:572px;" width="11" height="11" viewBox="0 0 11 11"><rect x="0.5" y="0.5" width="10" height="10" fill="#ddd"/><rect x="2" y="3" width="7" height="6" fill="none" stroke="#666"/><path d="M4 4.5H6.5V7H4Z" fill="#666"/></svg>
<div class="a" style="left:0px;top:587px;width:1110px;height:1px;background:#3a3a3a;"></div>
<div class="a" style="left:1px;top:589px;width:3px;height:12px;background:repeating-linear-gradient(#5c5c5c 0 1px,transparent 1px 2px);"></div>
<div class="t" style="left:14px;top:591.5px;font-size:6.2px;color:#b8b8b8;transform-origin:0 0;;transform:scaleX(1.061)">移动工具: 使用操纵器移动对象。按住 Ctrl + 鼠标中键并拖动以沿法线移动组件。按住 Shift 键并拖动操纵器轴或平面控制柄以挤出组件或克隆对象。按住 Ctrl + Shift + 鼠标左键并拖动以将移动约束到该曲面。使用 D 或 Insert 键更改枢轴位置和轴方向。</div>
<div class="a" style="left:1107px;top:602px;width:1px;height:5px;background:#888;"></div>
<div class="a" style="left:1110px;top:602px;width:5px;height:5px;background:#333;"></div>
<div class="t" style="left:1050px;top:604px;font-size:7px;color:#eee;">14:00</div>
<div class="t" style="left:418px;top:435px;font-size:18px;color:#ee1111;transform-origin:0 0;font-family:'Liberation Serif',serif;transform:scaleX(1.025)">3. 点击导入动捕数据</div>
<div class="t" style="left:729px;top:150px;font-size:18px;color:#ee1111;transform-origin:0 0;font-family:'Liberation Serif',serif;transform:scaleX(1.000)">1. 输入路径</div>
<div class="t" style="left:729px;top:211px;font-size:18px;color:#ee1111;transform-origin:0 0;font-family:'Liberation Serif',serif;transform:scaleX(1.011)">2. 选择相对应的资产名</div></body></html>
